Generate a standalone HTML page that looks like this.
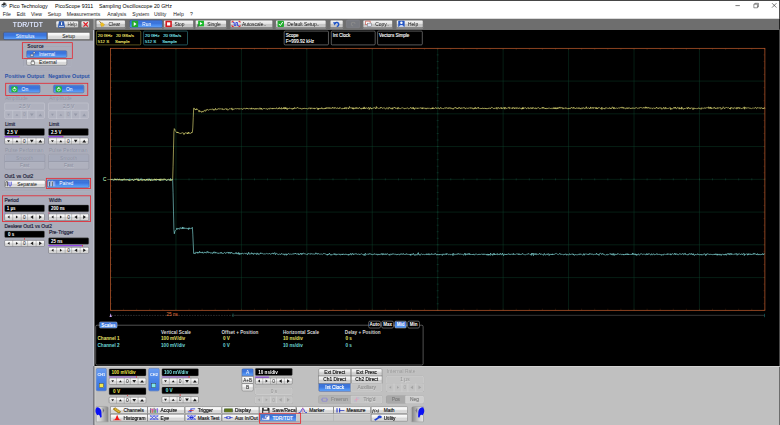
<!DOCTYPE html>
<html><head><meta charset="utf-8"><title>PicoScope 9311</title>
<style>
html,body{margin:0;padding:0;background:#c0c0c0;overflow:hidden;width:780px;height:425px}
#root{position:absolute;left:0;top:0;width:1920px;height:1047px;transform:scale(0.406250);transform-origin:0 0;font-family:"Liberation Sans",sans-serif;overflow:hidden}
#root div{position:absolute;box-sizing:border-box;white-space:nowrap}
#root svg{position:absolute;overflow:visible}
.t{font-size:11px}

.btn{background:linear-gradient(#ffffff,#efefef 45%,#d6d6d6 55%,#dedede);border:1.6px solid #6a6a6a;border-radius:4px;color:#111;font-size:12px;text-align:center}
.blue{background:linear-gradient(#4078dc,#3a72da 40%,#4585ea 60%,#62a4fa);border:1.6px solid #24489a;border-radius:4px;color:#fff;font-size:12px;text-align:center}
.dis{background:#afb1be;border:1px solid #d4d6de;border-radius:4px;color:#898e9f;font-size:12px;text-align:center;text-shadow:1px 1px 0 rgba(255,255,255,0.28)}
.disg{background:#c3c3c3;border:1.3px solid #e0e0e0;box-shadow:0 0 0 0.8px #a8a8a8;border-radius:4px;color:#939393;font-size:12px;text-align:center;text-shadow:1px 1px 0 rgba(255,255,255,0.3)}
.blk{background:#000;border-radius:3px;color:#fff;font-weight:bold;font-size:11px;border:1px solid #666}
.sp{background:linear-gradient(#fafafa,#d2d2d2);border:1px solid #808080;border-radius:2px;color:#222;font-size:9px;text-align:center}
.spd{background:#b8bcc9;border:1px solid #c9ccd6;border-radius:2px;color:#9a9eac;font-size:9px;text-align:center}
.spdg{background:#c6c6c6;border:1px solid #d4d4d4;border-radius:2px;color:#a5a5a5;font-size:9px;text-align:center}
.red{border:2.6px solid #e6242e}
.tb.btn{background:linear-gradient(#f6f6f6,#e2e2e2 45%,#c6c6c6 55%,#c9c9c9)}
.lbl{font-weight:bold}

</style></head><body><div id="root">
<div style="left:0.00px;top:0.00px;width:1920.00px;height:45.78px;background:#fff"></div>
<div style="left:0.00px;top:0.00px;width:1920.00px;height:1.85px;background:#1c1c1c"></div>
<div style="left:1918.28px;top:0.00px;width:1.72px;height:45.05px;background:#2a2a2a"></div>
<div class="t" style="left:22.89px;top:6.97px;height:15.60px;line-height:15.60px;font-size:13px;color:#000;">Pico Technology</div>
<div class="t" style="left:135.38px;top:6.97px;height:15.60px;line-height:15.60px;font-size:13px;color:#000;">PicoScope 9311</div>
<div class="t" style="left:243.69px;top:6.97px;height:15.60px;line-height:15.60px;font-size:13px;color:#000;">Sampling Oscilloscope 20 GHz</div>
<svg style="left:1.97px;top:6.15px;width:15.75px;height:14.28px" viewBox="0 0 16 14"><path d="M1 5 L9 1 L15 3.500 L7 8 Z" fill="#2a2a2a"/><path d="M1 6.500 L7 9.500 L15 5 L15 8 L7 13 L1 9.500 Z" fill="#5a7a9a"/><path d="M3 9.200 L7 11.300 L13 7.800" stroke="#dfe8f0" stroke-width="1" fill="none"/><rect x="6" y="0" width="5" height="3" fill="#3a3a3a"/></svg>
<svg style="left:1798.89px;top:-0.49px;width:123.08px;height:29.54px" viewBox="0 0 50 12"><path d="M4.6 5.6h4.4" stroke="#222" stroke-width="0.6" fill="none"/><path d="M23 4.2h3.6v3.6h-3.6z M24 4.2v-0.9h3.6v3.6h-1" stroke="#222" stroke-width="0.5" fill="none"/><path d="M41.2 3.2l4.4 4.4M45.6 3.2l-4.4 4.4" stroke="#222" stroke-width="0.6" fill="none"/></svg>
<div class="t" style="left:6.65px;top:27.58px;height:15.00px;line-height:15.00px;font-size:12.5px;color:#1a1a1a;">File</div>
<div class="t" style="left:41.11px;top:27.58px;height:15.00px;line-height:15.00px;font-size:12.5px;color:#1a1a1a;">Edit</div>
<div class="t" style="left:76.31px;top:27.58px;height:15.00px;line-height:15.00px;font-size:12.5px;color:#1a1a1a;">View</div>
<div class="t" style="left:117.42px;top:27.58px;height:15.00px;line-height:15.00px;font-size:12.5px;color:#1a1a1a;">Setup</div>
<div class="t" style="left:164.18px;top:27.58px;height:15.00px;line-height:15.00px;font-size:12.5px;color:#1a1a1a;">Measurements</div>
<div class="t" style="left:264.12px;top:27.58px;height:15.00px;line-height:15.00px;font-size:12.5px;color:#1a1a1a;">Analysis</div>
<div class="t" style="left:325.66px;top:27.58px;height:15.00px;line-height:15.00px;font-size:12.5px;color:#1a1a1a;">System</div>
<div class="t" style="left:379.08px;top:27.58px;height:15.00px;line-height:15.00px;font-size:12.5px;color:#1a1a1a;">Utility</div>
<div class="t" style="left:426.58px;top:27.58px;height:15.00px;line-height:15.00px;font-size:12.5px;color:#1a1a1a;">Help</div>
<div class="t" style="left:467.69px;top:27.58px;height:15.00px;line-height:15.00px;font-size:12.5px;color:#1a1a1a;">?</div>
<div style="left:0.00px;top:45.54px;width:1920.00px;height:28.31px;background:linear-gradient(#b0b0b0,#6e6e6e 1.2px,#6e6e6e)"></div>
<div class="btn tb" style="left:236.31px;top:49.48px;width:72.62px;height:19.20px;box-shadow:0 2.5px 1.5px rgba(255,255,255,0.22);line-height:19.40px;font-size:12px;text-align:left;padding-left:30.03px">Clear</div>
<svg style="left:241.72px;top:51.45px;width:16.25px;height:15.75px" viewBox="0 0 16 16"><path d="M2.500 1l5.500 6.500" stroke="#8a5a10" stroke-width="2"/><path d="M6.500 5.500l3.500-0.500 5.500 5-2 1.500-1 2.500-2.500-0.500-1.500 2-3.500-6z" fill="#f0c020" stroke="#b88a00" stroke-width="0.800"/></svg>
<div class="blue tb" style="left:318.77px;top:49.48px;width:80.74px;height:19.20px;box-shadow:0 2.5px 1.5px rgba(255,255,255,0.22);line-height:19.40px;font-size:12px;text-align:left;padding-left:30.28px">Run</div>
<svg style="left:324.18px;top:51.45px;width:16.25px;height:15.75px" viewBox="0 0 16 16"><rect x="0" y="0" width="16" height="16" fill="#1faa2c"/><path d="M5 3l7 5-7 5z" fill="#fff"/></svg>
<div class="btn tb" style="left:401.97px;top:49.48px;width:75.08px;height:19.20px;box-shadow:0 2.5px 1.5px rgba(255,255,255,0.22);line-height:19.40px;font-size:12px;text-align:left;padding-left:26.58px">Stop</div>
<svg style="left:407.38px;top:51.45px;width:16.25px;height:15.75px" viewBox="0 0 16 16"><rect x="0" y="0" width="16" height="16" fill="#d4181f"/><rect x="4" y="4" width="8" height="8" fill="#fff"/></svg>
<div class="btn tb" style="left:480.49px;top:49.48px;width:77.78px;height:19.20px;box-shadow:0 2.5px 1.5px rgba(255,255,255,0.22);line-height:19.40px;font-size:12px;text-align:left;padding-left:28.55px">Single</div>
<svg style="left:485.91px;top:51.45px;width:16.25px;height:15.75px" viewBox="0 0 16 16"><rect x="1.500" y="0" width="14.500" height="14" fill="#18b828"/><path d="M6 3l6.500 4-6.500 4z" fill="#fff"/><rect x="0" y="9" width="2" height="7" fill="#222"/></svg>
<div class="btn tb" style="left:566.15px;top:49.48px;width:105.85px;height:19.20px;box-shadow:0 2.5px 1.5px rgba(255,255,255,0.22);line-height:19.40px;font-size:12px;text-align:left;padding-left:28.55px">Autoscale..</div>
<svg style="left:569.60px;top:51.45px;width:22.15px;height:15.75px" viewBox="0 0 22 16"><path d="M1 5V1.500h4M17 1.500h4V5M21 11v3.500h-4M5 14.500H1V11" stroke="#e01820" stroke-width="2.200" fill="none"/><path d="M3 4.500h3.500v7.500h4V4.500h4v7.500h3.500" stroke="#2030e0" stroke-width="2" fill="none"/></svg>
<div class="btn tb" style="left:677.91px;top:49.48px;width:125.54px;height:19.20px;box-shadow:0 2.5px 1.5px rgba(255,255,255,0.22);line-height:19.40px;font-size:12px;text-align:left;padding-left:28.06px">Default Setup..</div>
<svg style="left:683.32px;top:51.45px;width:16.25px;height:15.75px" viewBox="0 0 16 16"><rect x="0" y="0" width="16" height="16" rx="2" fill="#1faa2c"/><path d="M3 8l4 4 6-9" stroke="#fff" stroke-width="2.5" fill="none"/></svg>
<div class="btn tb" style="left:812.31px;top:49.48px;width:32.74px;height:19.20px;box-shadow:0 2.5px 1.5px rgba(255,255,255,0.22);line-height:19.40px;font-size:12px;text-align:left;padding-left:28.06px"></div>
<svg style="left:820.18px;top:51.20px;width:16.74px;height:16.25px" viewBox="0 0 16 16"><path d="M4 7.500a4.800 4.800 0 1 1 4.500 6.500" stroke="#1f55c8" stroke-width="3.800" fill="none"/><path d="M-0.500 3.500l8.500 0.500-4.500 7.500z" fill="#1f55c8"/></svg>
<div style="left:852.43px;top:49.48px;width:33.72px;height:19.20px;background:#787a80;border:1px solid #8c8e94;border-radius:4px"></div>
<svg style="left:861.54px;top:51.69px;width:14.77px;height:14.77px" viewBox="0 0 16 16"><path d="M13 8a5 5 0 1 0-5 5" stroke="#8a8a8a" stroke-width="3" fill="none"/></svg>
<div class="btn tb" style="left:893.29px;top:49.48px;width:74.09px;height:19.20px;box-shadow:0 2.5px 1.5px rgba(255,255,255,0.22);line-height:19.40px;font-size:12px;text-align:left;padding-left:29.29px">Copy..</div>
<svg style="left:898.71px;top:51.45px;width:16.25px;height:15.75px" viewBox="0 0 16 16"><rect x="1" y="1" width="11" height="9" fill="#fff" stroke="#c0392b" stroke-width="1.5"/><rect x="5" y="6" width="10" height="9" fill="#dfe6f5" stroke="#555" stroke-width="1"/></svg>
<div class="btn tb" style="left:975.02px;top:49.48px;width:66.95px;height:19.20px;box-shadow:0 2.5px 1.5px rgba(255,255,255,0.22);line-height:19.40px;font-size:12px;text-align:left;padding-left:28.55px">Help</div>
<svg style="left:980.43px;top:51.45px;width:16.25px;height:15.75px" viewBox="0 0 16 16"><rect x="0" y="0" width="16" height="16" rx="2" fill="#2456c4"/><circle cx="8" cy="5" r="3" fill="#fff"/><path d="M2 15c0-5 12-5 12 0z" fill="#fff"/></svg>
<div style="left:0.00px;top:73.85px;width:231.38px;height:972.31px;background:#abadba"></div>
<div style="left:0.00px;top:73.60px;width:230.15px;height:26.58px;background:#6e6e6e"></div>
<div style="left:230.15px;top:901.42px;width:2.46px;height:144.74px;background:#55565c"></div>
<div style="left:230.89px;top:46.03px;width:2.95px;height:26.83px;background:linear-gradient(90deg,#d0d0d0,#a8a8a8)"></div>
<div style="left:232.62px;top:901.42px;width:1.97px;height:144.74px;background:#d4d4d4"></div>
<div class="t" style="left:1.23px;top:50.84px;height:19.92px;line-height:19.92px;font-size:16.6px;color:#dfe6fa;width:135.38px;text-align:center;letter-spacing:0.5px;text-shadow:0 0 1.5px #c8d4f8">TDR/TDT</div>
<div class="btn tb" style="left:137.35px;top:51.20px;width:56.86px;height:17.72px;line-height:17.92px;font-size:11.2px;text-align:left;padding-left:27.57px;color:#333">Help</div>
<svg style="left:142.77px;top:51.94px;width:16.74px;height:16.25px" viewBox="0 0 16 16"><path d="M2 0h12l2 11v5H0v-5z" fill="#2a58b0"/><path d="M7 2.500h2.500v7H7z" fill="#fff"/><path d="M2 11.500h12v2H2z" fill="#fff"/></svg>
<div class="btn tb" style="left:199.14px;top:51.20px;width:21.91px;height:17.72px;"></div>
<svg style="left:202.58px;top:52.68px;width:15.75px;height:14.28px" viewBox="0 0 16 16"><path d="M2 2l12 12M14 2L2 14" stroke="#e01b24" stroke-width="3.2"/></svg>
<div class="blue" style="left:7.88px;top:78.77px;width:107.82px;height:19.45px;line-height:19.65px;border-radius:4px 0 0 4px">Stimulus</div>
<div class="btn" style="left:115.69px;top:78.77px;width:106.58px;height:19.45px;line-height:19.65px;border-radius:0 4px 4px 0">Setup</div>
<div class="red" style="left:53.66px;top:104.12px;width:125.78px;height:40.86px;"></div>
<div style="left:57.11px;top:114.46px;width:118.89px;height:49.97px;border:1px solid #b9bdca;border-radius:4px;border-top-color:#9a9eac;border-left-color:#9a9eac"></div>
<div class="t" style="left:65.23px;top:106.52px;height:14.40px;line-height:14.40px;font-size:12px;color:#1c2038;font-weight:bold;background:#abadba;padding:0 2px">Source</div>
<div class="blue" style="left:64.74px;top:123.82px;width:99.94px;height:18.46px;line-height:18.66px;text-align:left;padding-left:30.0px">Internal</div>
<div class="btn" style="left:64.74px;top:144.74px;width:99.94px;height:16.49px;line-height:16.69px;text-align:left;padding-left:30.0px">External</div>
<svg style="left:72.62px;top:126.03px;width:14.77px;height:14.77px" viewBox="0 0 16 16"><path d="M2 8h8v6H2z" fill="#cfd6e6" stroke="#223" stroke-width="1"/><circle cx="12" cy="4" r="2.5" fill="#fff" stroke="#223"/></svg>
<svg style="left:73.85px;top:145.72px;width:13.54px;height:13.54px" viewBox="0 0 16 16"><path d="M3 7h10v8H3z M5 7V3h6v4" fill="#fff" stroke="#333" stroke-width="1.5"/></svg>
<div class="t" style="left:11.82px;top:181.13px;height:15.84px;line-height:15.84px;font-size:13.2px;color:#2a52a8;font-weight:bold">Positive Output</div>
<div class="t" style="left:118.65px;top:181.13px;height:15.84px;line-height:15.84px;font-size:13.2px;color:#2a52a8;font-weight:bold">Negative Output</div>
<div class="red" style="left:13.29px;top:204.06px;width:203.82px;height:32.00px;"></div>
<div class="blue" style="left:22.15px;top:209.23px;width:76.80px;height:20.18px;line-height:20.38px;text-align:left;padding-left:30.0px">On</div>
<svg style="left:27.57px;top:211.69px;width:15.26px;height:15.26px" viewBox="0 0 16 16"><rect width="16" height="16" rx="3" fill="#1fb53a"/><circle cx="8" cy="8.5" r="4" fill="none" stroke="#fff" stroke-width="1.8"/><path d="M8 2.5v5" stroke="#fff" stroke-width="2"/></svg>
<div class="blue" style="left:131.20px;top:209.23px;width:76.31px;height:20.18px;line-height:20.38px;text-align:left;padding-left:30.0px">On</div>
<svg style="left:136.62px;top:211.69px;width:15.26px;height:15.26px" viewBox="0 0 16 16"><rect width="16" height="16" rx="3" fill="#1fb53a"/><circle cx="8" cy="8.5" r="4" fill="none" stroke="#fff" stroke-width="1.8"/><path d="M8 2.5v5" stroke="#fff" stroke-width="2"/></svg>
<div class="t" style="left:12.80px;top:235.45px;height:15.00px;line-height:15.00px;font-size:12.5px;color:#898e9f;text-shadow:1px 1px 0 rgba(255,255,255,0.28)">Amplitude</div>
<div class="dis" style="left:11.08px;top:253.05px;width:98.95px;height:19.20px;line-height:19.40px;border-radius:3px 3px 0 0">2.5 V</div>
<div style="left:11.08px;top:271.51px;width:98.95px;height:20.92px;background:#b1b3c0;border:1px solid #d4d6de;border-radius:3px"></div>
<svg style="left:11.08px;top:271.51px;width:98.95px;height:20.92px" viewBox="0 0 98.95 20.92"><line x1="20.3" y1="0" x2="20.3" y2="20.9" stroke="#d3d6df" stroke-width="1"/><line x1="41.1" y1="0" x2="41.1" y2="20.9" stroke="#d3d6df" stroke-width="1"/><line x1="56.9" y1="0" x2="56.9" y2="20.9" stroke="#d3d6df" stroke-width="1"/><line x1="77.7" y1="0" x2="77.7" y2="20.9" stroke="#d3d6df" stroke-width="1"/><path d="M6.6 8.2h7.0l-3.5 5.1z" fill="#9599a8"/><path d="M27.2 13.1h7.0l-3.5 -5.1z" fill="#9599a8"/><path d="M62.7 7.5h9.2l-4.6 6.7z" fill="#9599a8"/><path d="M83.7 13.9h9.2l-4.6 -6.7z" fill="#9599a8"/></svg>
<div class="t" style="left:52.14px;top:275.02px;height:14.40px;line-height:14.40px;font-size:12px;color:#9599a8;width:15.83px;text-align:center;">0</div>
<div class="t" style="left:12.06px;top:298.28px;height:14.40px;line-height:14.40px;font-size:12px;color:#1c2038;-webkit-text-stroke:0.4px #1c2038">Limit</div>
<div class="blk" style="left:11.08px;top:315.82px;width:98.95px;height:18.46px;line-height:18.66px;padding-left:5px">2.5 V</div>
<div style="left:11.08px;top:335.02px;width:35.69px;height:2.95px;background:#8f45e4"></div>
<div style="left:46.03px;top:334.77px;width:1.97px;height:3.45px;background:#e03030"></div>
<div style="left:11.08px;top:338.95px;width:98.95px;height:16.49px;background:linear-gradient(#ffffff,#efefef 45%,#d4d4d4 55%,#dedede);border:1.6px solid #626262;border-radius:3px"></div>
<svg style="left:11.08px;top:338.95px;width:98.95px;height:16.49px" viewBox="0 0 98.95 16.49"><line x1="20.3" y1="0" x2="20.3" y2="16.5" stroke="#7a7a7a" stroke-width="1"/><line x1="41.1" y1="0" x2="41.1" y2="16.5" stroke="#7a7a7a" stroke-width="1"/><line x1="56.9" y1="0" x2="56.9" y2="16.5" stroke="#7a7a7a" stroke-width="1"/><line x1="77.7" y1="0" x2="77.7" y2="16.5" stroke="#7a7a7a" stroke-width="1"/><path d="M6.6 6.0h7.0l-3.5 5.1z" fill="#1a1a1a"/><path d="M27.2 10.9h7.0l-3.5 -5.1z" fill="#1a1a1a"/><path d="M62.7 5.3h9.2l-4.6 6.7z" fill="#1a1a1a"/><path d="M83.7 11.7h9.2l-4.6 -6.7z" fill="#1a1a1a"/></svg>
<div class="t" style="left:52.14px;top:340.25px;height:14.40px;line-height:14.40px;font-size:12px;color:#1a1a1a;width:15.83px;text-align:center;">0</div>
<div class="t" style="left:12.06px;top:361.55px;height:15.36px;line-height:15.36px;font-size:12.8px;color:#898e9f;text-shadow:1px 1px 0 rgba(255,255,255,0.28)">Pulse Performan</div>
<div class="dis" style="left:11.08px;top:378.58px;width:99.45px;height:19.69px;line-height:19.89px;border-radius:4px 4px 0 0;background:#a6aaba;border-color:#8f93a2;box-shadow:inset 1px 1px 0 #c0c3ce">Smooth</div>
<div class="dis" style="left:11.08px;top:397.54px;width:99.45px;height:19.20px;line-height:19.40px;border-radius:0 0 4px 4px;border-color:#8f93a2;box-shadow:inset 1px 1px 0 #c0c3ce">Fast</div>
<div class="t" style="left:121.11px;top:235.45px;height:15.00px;line-height:15.00px;font-size:12.5px;color:#898e9f;text-shadow:1px 1px 0 rgba(255,255,255,0.28)">Amplitude</div>
<div class="dis" style="left:119.38px;top:253.05px;width:98.95px;height:19.20px;line-height:19.40px;border-radius:3px 3px 0 0">2.5 V</div>
<div style="left:119.38px;top:271.51px;width:98.95px;height:20.92px;background:#b1b3c0;border:1px solid #d4d6de;border-radius:3px"></div>
<svg style="left:119.38px;top:271.51px;width:98.95px;height:20.92px" viewBox="0 0 98.95 20.92"><line x1="20.3" y1="0" x2="20.3" y2="20.9" stroke="#d3d6df" stroke-width="1"/><line x1="41.1" y1="0" x2="41.1" y2="20.9" stroke="#d3d6df" stroke-width="1"/><line x1="56.9" y1="0" x2="56.9" y2="20.9" stroke="#d3d6df" stroke-width="1"/><line x1="77.7" y1="0" x2="77.7" y2="20.9" stroke="#d3d6df" stroke-width="1"/><path d="M6.6 8.2h7.0l-3.5 5.1z" fill="#9599a8"/><path d="M27.2 13.1h7.0l-3.5 -5.1z" fill="#9599a8"/><path d="M62.7 7.5h9.2l-4.6 6.7z" fill="#9599a8"/><path d="M83.7 13.9h9.2l-4.6 -6.7z" fill="#9599a8"/></svg>
<div class="t" style="left:160.45px;top:275.02px;height:14.40px;line-height:14.40px;font-size:12px;color:#9599a8;width:15.83px;text-align:center;">0</div>
<div class="t" style="left:120.37px;top:298.28px;height:14.40px;line-height:14.40px;font-size:12px;color:#1c2038;-webkit-text-stroke:0.4px #1c2038">Limit</div>
<div class="blk" style="left:119.38px;top:315.82px;width:98.95px;height:18.46px;line-height:18.66px;padding-left:5px">2.5 V</div>
<div style="left:119.38px;top:335.02px;width:35.69px;height:2.95px;background:#8f45e4"></div>
<div style="left:154.34px;top:334.77px;width:1.97px;height:3.45px;background:#e03030"></div>
<div style="left:119.38px;top:338.95px;width:98.95px;height:16.49px;background:linear-gradient(#ffffff,#efefef 45%,#d4d4d4 55%,#dedede);border:1.6px solid #626262;border-radius:3px"></div>
<svg style="left:119.38px;top:338.95px;width:98.95px;height:16.49px" viewBox="0 0 98.95 16.49"><line x1="20.3" y1="0" x2="20.3" y2="16.5" stroke="#7a7a7a" stroke-width="1"/><line x1="41.1" y1="0" x2="41.1" y2="16.5" stroke="#7a7a7a" stroke-width="1"/><line x1="56.9" y1="0" x2="56.9" y2="16.5" stroke="#7a7a7a" stroke-width="1"/><line x1="77.7" y1="0" x2="77.7" y2="16.5" stroke="#7a7a7a" stroke-width="1"/><path d="M6.6 6.0h7.0l-3.5 5.1z" fill="#1a1a1a"/><path d="M27.2 10.9h7.0l-3.5 -5.1z" fill="#1a1a1a"/><path d="M62.7 5.3h9.2l-4.6 6.7z" fill="#1a1a1a"/><path d="M83.7 11.7h9.2l-4.6 -6.7z" fill="#1a1a1a"/></svg>
<div class="t" style="left:160.45px;top:340.25px;height:14.40px;line-height:14.40px;font-size:12px;color:#1a1a1a;width:15.83px;text-align:center;">0</div>
<div class="t" style="left:120.37px;top:361.55px;height:15.36px;line-height:15.36px;font-size:12.8px;color:#898e9f;text-shadow:1px 1px 0 rgba(255,255,255,0.28)">Pulse Performan</div>
<div class="dis" style="left:119.38px;top:378.58px;width:99.45px;height:19.69px;line-height:19.89px;border-radius:4px 4px 0 0;background:#a6aaba;border-color:#8f93a2;box-shadow:inset 1px 1px 0 #c0c3ce">Smooth</div>
<div class="dis" style="left:119.38px;top:397.54px;width:99.45px;height:19.20px;line-height:19.40px;border-radius:0 0 4px 4px;border-color:#8f93a2;box-shadow:inset 1px 1px 0 #c0c3ce">Fast</div>
<div class="t" style="left:11.08px;top:426.03px;height:14.40px;line-height:14.40px;font-size:12px;color:#1c2038;-webkit-text-stroke:0.4px #1c2038">Out1 vs Out2</div>
<div class="btn" style="left:11.08px;top:443.08px;width:100.43px;height:18.71px;line-height:18.91px;text-align:left;padding-left:30.3px">Separate</div>
<div class="red" style="left:112.74px;top:438.15px;width:111.51px;height:27.32px;"></div>
<div class="blue" style="left:116.18px;top:442.34px;width:103.63px;height:19.69px;line-height:19.89px;text-align:left;padding-left:28.6px">Paired</div>
<svg style="left:13.78px;top:445.54px;width:24.62px;height:13.78px" viewBox="0 0 20 11"><path d="M0.5 10V1h3.2v9" stroke="#111" stroke-width="1.3" fill="#fff"/><path d="M6.5 1v6.5c0 3 4.5 3 4.5 0V1" stroke="#2020d8" stroke-width="1.5" fill="none"/></svg>
<svg style="left:119.14px;top:445.05px;width:24.62px;height:14.77px" viewBox="0 0 20 12"><path d="M0.5 11V1h3.2v10" stroke="#fff" stroke-width="1.3" fill="#234"/><path d="M6.3 11V1h3v10" stroke="#fff" stroke-width="1.3" fill="#234"/><path d="M11.2 1v10M13 1v10" stroke="#c8d0ff" stroke-width="1.1"/></svg>
<div style="left:4.92px;top:469.66px;width:218.09px;height:1.23px;background:#858997"></div>
<div style="left:4.92px;top:470.89px;width:218.09px;height:1.23px;background:#c4c7d2"></div>
<div style="left:7.14px;top:172.80px;width:216.37px;height:1.23px;background:#8f93a1"></div>
<div style="left:7.14px;top:174.03px;width:216.37px;height:1.23px;background:#c0c3ce"></div>
<div class="red" style="left:5.42px;top:481.23px;width:219.08px;height:64.74px;"></div>
<div class="t" style="left:11.08px;top:485.60px;height:14.40px;line-height:14.40px;font-size:12px;color:#1c2038;-webkit-text-stroke:0.4px #1c2038">Period</div>
<div class="t" style="left:120.62px;top:485.60px;height:14.40px;line-height:14.40px;font-size:12px;color:#1c2038;-webkit-text-stroke:0.4px #1c2038">Width</div>
<div class="blk" style="left:10.58px;top:503.88px;width:99.20px;height:18.46px;line-height:18.66px;padding-left:5px">1 µs</div>
<div style="left:10.58px;top:523.32px;width:2.22px;height:2.22px;background:#9050e0"></div>
<div class="blk" style="left:119.38px;top:503.88px;width:99.69px;height:18.46px;line-height:18.66px;padding-left:5px">200 ns</div>
<div style="left:119.38px;top:523.32px;width:2.22px;height:2.22px;background:#c04060"></div>
<div style="left:10.58px;top:526.28px;width:99.20px;height:16.49px;background:linear-gradient(#ffffff,#efefef 45%,#d4d4d4 55%,#dedede);border:1.6px solid #626262;border-radius:3px"></div>
<svg style="left:10.58px;top:526.28px;width:99.20px;height:16.49px" viewBox="0 0 99.20 16.49"><line x1="20.3" y1="0" x2="20.3" y2="16.5" stroke="#7a7a7a" stroke-width="1"/><line x1="41.2" y1="0" x2="41.2" y2="16.5" stroke="#7a7a7a" stroke-width="1"/><line x1="57.0" y1="0" x2="57.0" y2="16.5" stroke="#7a7a7a" stroke-width="1"/><line x1="77.9" y1="0" x2="77.9" y2="16.5" stroke="#7a7a7a" stroke-width="1"/><path d="M12.6 4.7v7.0l-5.1 -3.5z" fill="#1a1a1a"/><path d="M28.3 4.7v7.0l5.1 -3.5z" fill="#1a1a1a"/><path d="M70.7 3.6v9.2l-6.7 -4.6z" fill="#1a1a1a"/><path d="M85.3 3.6v9.2l6.7 -4.6z" fill="#1a1a1a"/></svg>
<div class="t" style="left:51.75px;top:527.57px;height:14.40px;line-height:14.40px;font-size:12px;color:#1a1a1a;width:15.87px;text-align:center;">0</div>
<div style="left:119.38px;top:526.28px;width:99.69px;height:16.49px;background:linear-gradient(#ffffff,#efefef 45%,#d4d4d4 55%,#dedede);border:1.6px solid #626262;border-radius:3px"></div>
<svg style="left:119.38px;top:526.28px;width:99.69px;height:16.49px" viewBox="0 0 99.69 16.49"><line x1="20.4" y1="0" x2="20.4" y2="16.5" stroke="#7a7a7a" stroke-width="1"/><line x1="41.4" y1="0" x2="41.4" y2="16.5" stroke="#7a7a7a" stroke-width="1"/><line x1="57.3" y1="0" x2="57.3" y2="16.5" stroke="#7a7a7a" stroke-width="1"/><line x1="78.3" y1="0" x2="78.3" y2="16.5" stroke="#7a7a7a" stroke-width="1"/><path d="M12.7 4.7v7.0l-5.1 -3.5z" fill="#1a1a1a"/><path d="M28.5 4.7v7.0l5.1 -3.5z" fill="#1a1a1a"/><path d="M71.0 3.6v9.2l-6.7 -4.6z" fill="#1a1a1a"/><path d="M85.8 3.6v9.2l6.7 -4.6z" fill="#1a1a1a"/></svg>
<div class="t" style="left:160.76px;top:527.57px;height:14.40px;line-height:14.40px;font-size:12px;color:#1a1a1a;width:15.95px;text-align:center;">0</div>
<div class="t" style="left:11.08px;top:548.62px;height:14.40px;line-height:14.40px;font-size:12px;color:#1c2038;-webkit-text-stroke:0.4px #1c2038">Deskew Out1 vs Out2</div>
<div class="blk" style="left:10.58px;top:568.12px;width:99.20px;height:17.23px;line-height:17.43px;padding-left:8px">0 s</div>
<div style="left:59.08px;top:586.34px;width:1.97px;height:3.45px;background:#e03030"></div>
<div style="left:10.58px;top:591.02px;width:99.20px;height:16.00px;background:linear-gradient(#ffffff,#efefef 45%,#d4d4d4 55%,#dedede);border:1.6px solid #626262;border-radius:3px"></div>
<svg style="left:10.58px;top:591.02px;width:99.20px;height:16.00px" viewBox="0 0 99.20 16.00"><line x1="20.3" y1="0" x2="20.3" y2="16.0" stroke="#7a7a7a" stroke-width="1"/><line x1="41.2" y1="0" x2="41.2" y2="16.0" stroke="#7a7a7a" stroke-width="1"/><line x1="57.0" y1="0" x2="57.0" y2="16.0" stroke="#7a7a7a" stroke-width="1"/><line x1="77.9" y1="0" x2="77.9" y2="16.0" stroke="#7a7a7a" stroke-width="1"/><path d="M12.6 4.5v7.0l-5.1 -3.5z" fill="#1a1a1a"/><path d="M28.3 4.5v7.0l5.1 -3.5z" fill="#1a1a1a"/><path d="M70.7 3.4v9.2l-6.7 -4.6z" fill="#1a1a1a"/><path d="M85.3 3.4v9.2l6.7 -4.6z" fill="#1a1a1a"/></svg>
<div class="t" style="left:51.75px;top:592.06px;height:14.40px;line-height:14.40px;font-size:12px;color:#1a1a1a;width:15.87px;text-align:center;">0</div>
<div class="t" style="left:120.62px;top:565.35px;height:14.40px;line-height:14.40px;font-size:12px;color:#1c2038;-webkit-text-stroke:0.4px #1c2038">Pre-Trigger</div>
<div class="blk" style="left:119.38px;top:584.86px;width:99.69px;height:17.48px;line-height:17.68px;padding-left:5px">25 ns</div>
<div style="left:119.38px;top:603.08px;width:83.69px;height:3.20px;background:#8f45e4"></div>
<div style="left:201.85px;top:602.83px;width:2.22px;height:3.69px;background:#e03030"></div>
<div style="left:119.38px;top:608.49px;width:99.69px;height:16.00px;background:linear-gradient(#ffffff,#efefef 45%,#d4d4d4 55%,#dedede);border:1.6px solid #626262;border-radius:3px"></div>
<svg style="left:119.38px;top:608.49px;width:99.69px;height:16.00px" viewBox="0 0 99.69 16.00"><line x1="20.4" y1="0" x2="20.4" y2="16.0" stroke="#7a7a7a" stroke-width="1"/><line x1="41.4" y1="0" x2="41.4" y2="16.0" stroke="#7a7a7a" stroke-width="1"/><line x1="57.3" y1="0" x2="57.3" y2="16.0" stroke="#7a7a7a" stroke-width="1"/><line x1="78.3" y1="0" x2="78.3" y2="16.0" stroke="#7a7a7a" stroke-width="1"/><path d="M12.7 4.5v7.0l-5.1 -3.5z" fill="#1a1a1a"/><path d="M28.5 4.5v7.0l5.1 -3.5z" fill="#1a1a1a"/><path d="M71.0 3.4v9.2l-6.7 -4.6z" fill="#1a1a1a"/><path d="M85.8 3.4v9.2l6.7 -4.6z" fill="#1a1a1a"/></svg>
<div class="t" style="left:160.76px;top:609.54px;height:14.40px;line-height:14.40px;font-size:12px;color:#1a1a1a;width:15.95px;text-align:center;">0</div>
<div style="left:231.63px;top:72.62px;width:1688.37px;height:828.80px;background:#000"></div>
<div style="left:228.68px;top:73.85px;width:2.95px;height:827.57px;background:linear-gradient(90deg,#b4b8c6,#cfd1da)"></div>
<div style="left:1918.03px;top:45.05px;width:1.97px;height:27.57px;background:#111"></div>
<div style="left:1918.03px;top:72.62px;width:1.97px;height:973.54px;background:#5a5a5a"></div>
<div style="left:236.55px;top:76.31px;width:110.52px;height:35.20px;border:1.5px solid #d8c84a;border-radius:3px"></div>
<div class="t" style="left:240.74px;top:80.04px;height:12.72px;line-height:12.72px;font-size:10.6px;color:#f0e468;-webkit-text-stroke:0.3px #f0e468">20 GHz &nbsp;&nbsp;20 GSa/s</div>
<div class="t" style="left:240.74px;top:95.79px;height:12.72px;line-height:12.72px;font-size:10.6px;color:#f0e468;-webkit-text-stroke:0.3px #f0e468">512 S &nbsp;&nbsp;&nbsp;&nbsp;Sample</div>
<div style="left:352.74px;top:76.31px;width:109.54px;height:35.20px;border:1.5px solid #4ec6cf;border-radius:3px"></div>
<div class="t" style="left:356.92px;top:80.04px;height:12.72px;line-height:12.72px;font-size:10.6px;color:#7ce4ee;-webkit-text-stroke:0.3px #7ce4ee">20 GHz &nbsp;&nbsp;20 GSa/s</div>
<div class="t" style="left:356.92px;top:95.79px;height:12.72px;line-height:12.72px;font-size:10.6px;color:#7ce4ee;-webkit-text-stroke:0.3px #7ce4ee">512 S &nbsp;&nbsp;&nbsp;&nbsp;Sample</div>
<div style="left:699.08px;top:76.31px;width:110.28px;height:35.20px;border:1.5px solid #d8d8d8;border-radius:3px"></div>
<div class="t" style="left:703.26px;top:79.68px;height:13.44px;line-height:13.44px;font-size:11.2px;color:#ffffff;-webkit-text-stroke:0.3px #ffffff">Scope</div>
<div class="t" style="left:703.26px;top:95.43px;height:13.44px;line-height:13.44px;font-size:11.2px;color:#ffffff;-webkit-text-stroke:0.3px #ffffff">F=999.92 kHz</div>
<div style="left:814.77px;top:76.31px;width:109.05px;height:35.20px;border:1.5px solid #d8d8d8;border-radius:3px"></div>
<div class="t" style="left:818.95px;top:79.68px;height:13.44px;line-height:13.44px;font-size:11.2px;color:#ffffff;-webkit-text-stroke:0.3px #ffffff">Int Clock</div>
<div class="t" style="left:818.95px;top:95.43px;height:13.44px;line-height:13.44px;font-size:11.2px;color:#ffffff;-webkit-text-stroke:0.3px #ffffff"></div>
<div style="left:928.74px;top:76.31px;width:111.02px;height:35.20px;border:1.5px solid #d8d8d8;border-radius:3px"></div>
<div class="t" style="left:932.92px;top:79.68px;height:13.44px;line-height:13.44px;font-size:11.2px;color:#ffffff;-webkit-text-stroke:0.3px #ffffff">Vectors Simple</div>
<div class="t" style="left:932.92px;top:95.43px;height:13.44px;line-height:13.44px;font-size:11.2px;color:#ffffff;-webkit-text-stroke:0.3px #ffffff"></div>
<svg style="left:271.51px;top:119.14px;width:1610.83px;height:644.92px" viewBox="0 0 1610.83 644.92"><line x1="161.1" y1="0" x2="161.1" y2="644.9" stroke="#0f4a32" stroke-width="1"/><line x1="322.2" y1="0" x2="322.2" y2="644.9" stroke="#0f4a32" stroke-width="1"/><line x1="483.2" y1="0" x2="483.2" y2="644.9" stroke="#0f4a32" stroke-width="1"/><line x1="644.3" y1="0" x2="644.3" y2="644.9" stroke="#0f4a32" stroke-width="1"/><line x1="805.4" y1="0" x2="805.4" y2="644.9" stroke="#0f4a32" stroke-width="1"/><line x1="966.5" y1="0" x2="966.5" y2="644.9" stroke="#0f4a32" stroke-width="1"/><line x1="1127.6" y1="0" x2="1127.6" y2="644.9" stroke="#0f4a32" stroke-width="1"/><line x1="1288.7" y1="0" x2="1288.7" y2="644.9" stroke="#0f4a32" stroke-width="1"/><line x1="1449.7" y1="0" x2="1449.7" y2="644.9" stroke="#0f4a32" stroke-width="1"/><line x1="0" y1="80.6" x2="1610.8" y2="80.6" stroke="#0f4a32" stroke-width="1"/><line x1="0" y1="161.2" x2="1610.8" y2="161.2" stroke="#0f4a32" stroke-width="1"/><line x1="0" y1="241.8" x2="1610.8" y2="241.8" stroke="#0f4a32" stroke-width="1"/><line x1="0" y1="322.5" x2="1610.8" y2="322.5" stroke="#0f4a32" stroke-width="1"/><line x1="0" y1="403.1" x2="1610.8" y2="403.1" stroke="#0f4a32" stroke-width="1"/><line x1="0" y1="483.7" x2="1610.8" y2="483.7" stroke="#0f4a32" stroke-width="1"/><line x1="0" y1="564.3" x2="1610.8" y2="564.3" stroke="#0f4a32" stroke-width="1"/><path d="M0.0 0v4M0.0 644.9v-4M32.2 0v4M32.2 644.9v-4M64.4 0v4M64.4 644.9v-4M96.6 0v4M96.6 644.9v-4M128.9 0v4M128.9 644.9v-4M161.1 0v4M161.1 644.9v-4M193.3 0v4M193.3 644.9v-4M225.5 0v4M225.5 644.9v-4M257.7 0v4M257.7 644.9v-4M289.9 0v4M289.9 644.9v-4M322.2 0v4M322.2 644.9v-4M354.4 0v4M354.4 644.9v-4M386.6 0v4M386.6 644.9v-4M418.8 0v4M418.8 644.9v-4M451.0 0v4M451.0 644.9v-4M483.2 0v4M483.2 644.9v-4M515.5 0v4M515.5 644.9v-4M547.7 0v4M547.7 644.9v-4M579.9 0v4M579.9 644.9v-4M612.1 0v4M612.1 644.9v-4M644.3 0v4M644.3 644.9v-4M676.5 0v4M676.5 644.9v-4M708.8 0v4M708.8 644.9v-4M741.0 0v4M741.0 644.9v-4M773.2 0v4M773.2 644.9v-4M805.4 0v4M805.4 644.9v-4M837.6 0v4M837.6 644.9v-4M869.8 0v4M869.8 644.9v-4M902.1 0v4M902.1 644.9v-4M934.3 0v4M934.3 644.9v-4M966.5 0v4M966.5 644.9v-4M998.7 0v4M998.7 644.9v-4M1030.9 0v4M1030.9 644.9v-4M1063.1 0v4M1063.1 644.9v-4M1095.4 0v4M1095.4 644.9v-4M1127.6 0v4M1127.6 644.9v-4M1159.8 0v4M1159.8 644.9v-4M1192.0 0v4M1192.0 644.9v-4M1224.2 0v4M1224.2 644.9v-4M1256.4 0v4M1256.4 644.9v-4M1288.7 0v4M1288.7 644.9v-4M1320.9 0v4M1320.9 644.9v-4M1353.1 0v4M1353.1 644.9v-4M1385.3 0v4M1385.3 644.9v-4M1417.5 0v4M1417.5 644.9v-4M1449.7 0v4M1449.7 644.9v-4M1482.0 0v4M1482.0 644.9v-4M1514.2 0v4M1514.2 644.9v-4M1546.4 0v4M1546.4 644.9v-4M1578.6 0v4M1578.6 644.9v-4M1610.8 0v4M1610.8 644.9v-4M0 0.0h4M1610.8 0.0h-4M0 16.1h4M1610.8 16.1h-4M0 32.2h4M1610.8 32.2h-4M0 48.4h4M1610.8 48.4h-4M0 64.5h4M1610.8 64.5h-4M0 80.6h4M1610.8 80.6h-4M0 96.7h4M1610.8 96.7h-4M0 112.9h4M1610.8 112.9h-4M0 129.0h4M1610.8 129.0h-4M0 145.1h4M1610.8 145.1h-4M0 161.2h4M1610.8 161.2h-4M0 177.4h4M1610.8 177.4h-4M0 193.5h4M1610.8 193.5h-4M0 209.6h4M1610.8 209.6h-4M0 225.7h4M1610.8 225.7h-4M0 241.8h4M1610.8 241.8h-4M0 258.0h4M1610.8 258.0h-4M0 274.1h4M1610.8 274.1h-4M0 290.2h4M1610.8 290.2h-4M0 306.3h4M1610.8 306.3h-4M0 322.5h4M1610.8 322.5h-4M0 338.6h4M1610.8 338.6h-4M0 354.7h4M1610.8 354.7h-4M0 370.8h4M1610.8 370.8h-4M0 387.0h4M1610.8 387.0h-4M0 403.1h4M1610.8 403.1h-4M0 419.2h4M1610.8 419.2h-4M0 435.3h4M1610.8 435.3h-4M0 451.4h4M1610.8 451.4h-4M0 467.6h4M1610.8 467.6h-4M0 483.7h4M1610.8 483.7h-4M0 499.8h4M1610.8 499.8h-4M0 515.9h4M1610.8 515.9h-4M0 532.1h4M1610.8 532.1h-4M0 548.2h4M1610.8 548.2h-4M0 564.3h4M1610.8 564.3h-4M0 580.4h4M1610.8 580.4h-4M0 596.6h4M1610.8 596.6h-4M0 612.7h4M1610.8 612.7h-4M0 628.8h4M1610.8 628.8h-4M0 644.9h4M1610.8 644.9h-4" stroke="#70381c" stroke-width="0.8"/><path d="M0.0 320.0v5M32.2 320.0v5M64.4 320.0v5M96.6 320.0v5M128.9 320.0v5M161.1 320.0v5M193.3 320.0v5M225.5 320.0v5M257.7 320.0v5M289.9 320.0v5M322.2 320.0v5M354.4 320.0v5M386.6 320.0v5M418.8 320.0v5M451.0 320.0v5M483.2 320.0v5M515.5 320.0v5M547.7 320.0v5M579.9 320.0v5M612.1 320.0v5M644.3 320.0v5M676.5 320.0v5M708.8 320.0v5M741.0 320.0v5M773.2 320.0v5M805.4 320.0v5M837.6 320.0v5M869.8 320.0v5M902.1 320.0v5M934.3 320.0v5M966.5 320.0v5M998.7 320.0v5M1030.9 320.0v5M1063.1 320.0v5M1095.4 320.0v5M1127.6 320.0v5M1159.8 320.0v5M1192.0 320.0v5M1224.2 320.0v5M1256.4 320.0v5M1288.7 320.0v5M1320.9 320.0v5M1353.1 320.0v5M1385.3 320.0v5M1417.5 320.0v5M1449.7 320.0v5M1482.0 320.0v5M1514.2 320.0v5M1546.4 320.0v5M1578.6 320.0v5M1610.8 320.0v5M802.9 0.0h5M802.9 16.1h5M802.9 32.2h5M802.9 48.4h5M802.9 64.5h5M802.9 80.6h5M802.9 96.7h5M802.9 112.9h5M802.9 129.0h5M802.9 145.1h5M802.9 161.2h5M802.9 177.4h5M802.9 193.5h5M802.9 209.6h5M802.9 225.7h5M802.9 241.8h5M802.9 258.0h5M802.9 274.1h5M802.9 290.2h5M802.9 306.3h5M802.9 322.5h5M802.9 338.6h5M802.9 354.7h5M802.9 370.8h5M802.9 387.0h5M802.9 403.1h5M802.9 419.2h5M802.9 435.3h5M802.9 451.4h5M802.9 467.6h5M802.9 483.7h5M802.9 499.8h5M802.9 515.9h5M802.9 532.1h5M802.9 548.2h5M802.9 564.3h5M802.9 580.4h5M802.9 596.6h5M802.9 612.7h5M802.9 628.8h5M802.9 644.9h5" stroke="#1c5a4a" stroke-width="1"/><rect x="0" y="0" width="1610.8" height="644.9" fill="none" stroke="#b4562a" stroke-width="1.9"/><polyline points="0.0,323.1 1.0,324.1 2.1,323.2 3.1,323.1 4.1,322.3 5.2,323.2 6.2,324.8 7.2,324.0 8.3,324.7 9.3,323.8 10.3,323.9 11.4,323.7 12.4,321.4 13.4,324.5 14.5,324.1 15.5,324.1 16.5,321.4 17.6,321.3 18.6,322.4 19.6,322.9 20.7,323.8 21.7,323.4 22.7,324.1 23.8,322.7 24.8,323.8 25.8,323.9 26.9,322.6 27.9,325.6 28.9,324.1 30.0,324.9 31.0,322.7 32.0,322.5 33.1,323.0 34.1,323.3 35.2,324.2 36.2,323.8 37.2,322.9 38.3,322.3 39.3,322.8 40.3,324.9 41.4,322.5 42.4,323.7 43.4,324.0 44.5,321.6 45.5,323.5 46.5,325.1 47.6,321.0 48.6,323.1 49.6,323.3 50.7,322.4 51.7,324.1 52.7,323.4 53.8,321.6 54.8,324.5 55.8,324.3 56.9,324.6 57.9,325.2 58.9,323.9 60.0,323.6 61.0,321.8 62.0,324.2 63.1,322.7 64.1,322.9 65.1,321.9 66.2,322.3 67.2,322.8 68.2,325.0 69.3,320.9 70.3,321.7 71.3,323.7 72.4,325.2 73.4,324.2 74.4,321.1 75.5,320.3 76.5,323.9 77.5,322.5 78.6,322.1 79.6,324.6 80.6,324.8 81.7,323.6 82.7,323.7 83.7,324.0 84.8,325.4 85.8,324.2 86.8,324.1 87.9,324.1 88.9,321.5 89.9,325.0 91.0,324.6 92.0,324.1 93.0,321.0 94.1,322.7 95.1,324.5 96.1,321.2 97.2,323.2 98.2,324.7 99.2,321.8 100.3,325.4 101.3,324.1 102.4,323.3 103.4,323.8 104.4,324.2 105.5,323.6 106.5,324.9 107.5,322.6 108.6,322.9 109.6,324.7 110.6,323.5 111.7,322.4 112.7,324.6 113.7,325.2 114.8,322.9 115.8,321.7 116.8,323.3 117.9,323.3 118.9,323.1 119.9,325.2 121.0,322.2 122.0,325.0 123.0,321.9 124.1,322.5 125.1,324.2 126.1,324.8 127.2,324.5 128.2,323.9 129.2,323.6 130.3,323.6 131.3,324.2 132.3,323.2 133.4,323.8 134.4,324.2 135.4,323.4 136.5,324.4 137.5,324.1 138.5,325.9 139.6,323.8 140.6,322.9 141.6,323.0 142.7,323.4 143.7,324.6 144.7,323.0 145.8,323.9 146.8,325.7 147.8,320.3 148.9,322.1 149.9,323.7 150.9,323.9 152.0,323.7 153.0,322.9 154.0,355.1 155.1,400.9 156.1,446.2 157.1,456.4 158.2,451.7 159.2,448.8 160.2,448.0 161.3,446.7 162.3,446.1 163.3,442.1 164.4,444.3 165.4,445.7 166.4,442.7 167.5,443.8 168.5,444.8 169.6,444.5 170.6,445.2 171.6,441.1 172.7,442.7 173.7,442.7 174.7,443.8 175.8,444.3 176.8,439.7 177.8,444.3 178.9,441.1 179.9,443.7 180.9,441.0 182.0,443.1 183.0,444.3 184.0,442.7 185.1,443.1 186.1,443.8 187.1,443.0 188.2,442.7 189.2,444.7 190.2,444.1 191.3,442.5 192.3,446.2 193.3,441.4 194.4,444.0 195.4,442.5 196.4,443.0 197.5,443.7 198.5,443.1 199.5,443.6 200.6,441.0 201.6,441.0 202.6,457.5 203.7,482.1 204.7,504.7 205.7,503.3 206.8,506.0 207.8,504.8 208.8,505.2 209.9,501.9 210.9,502.8 211.9,501.2 213.0,503.4 214.0,504.3 215.0,501.2 216.1,504.1 217.1,503.4 218.1,501.9 219.2,499.7 220.2,503.9 221.2,502.0 222.3,501.4 223.3,502.7 224.3,502.7 225.4,504.1 226.4,501.0 227.4,503.7 228.5,504.1 229.5,504.1 230.5,502.1 231.6,501.5 232.6,503.7 233.6,502.6 234.7,502.7 235.7,504.3 236.8,502.3 237.8,499.8 238.8,502.2 239.9,500.4 240.9,503.7 241.9,503.2 243.0,502.0 244.0,502.8 245.0,503.9 246.1,503.0 247.1,504.6 248.1,502.9 249.2,504.3 250.2,504.9 251.2,505.1 252.3,502.3 253.3,504.2 254.3,500.9 255.4,501.9 256.4,500.8 257.4,504.6 258.5,501.8 259.5,503.3 260.5,503.1 261.6,503.4 262.6,502.7 263.6,503.7 264.7,505.7 265.7,503.6 266.7,504.2 267.8,504.8 268.8,503.4 269.8,502.1 270.9,503.0 271.9,505.0 272.9,501.7 274.0,503.0 275.0,505.0 276.0,504.8 277.1,503.8 278.1,504.9 279.1,504.1 280.2,502.5 281.2,502.0 282.2,503.2 283.3,505.1 284.3,503.3 285.3,502.9 286.4,503.1 287.4,502.2 288.4,504.0 289.5,502.7 290.5,504.6 291.5,501.3 292.6,504.6 293.6,503.5 294.6,501.9 295.7,505.2 296.7,504.0 297.7,501.6 298.8,503.3 299.8,504.7 300.8,503.8 301.9,505.4 302.9,505.4 304.0,505.3 305.0,504.9 306.0,506.2 307.1,505.3 308.1,505.1 309.1,502.0 310.2,505.7 311.2,506.2 312.2,504.3 313.3,504.1 314.3,507.1 315.3,502.5 316.4,505.3 317.4,507.7 318.4,503.6 319.5,505.6 320.5,507.1 321.5,504.7 322.6,505.5 323.6,506.0 324.6,503.8 325.7,504.8 326.7,505.3 327.7,505.9 328.8,504.9 329.8,504.7 330.8,503.7 331.9,504.6 332.9,506.1 333.9,505.2 335.0,504.0 336.0,504.0 337.0,508.4 338.1,506.5 339.1,505.9 340.1,501.9 341.2,505.9 342.2,505.8 343.2,507.3 344.3,505.7 345.3,505.1 346.3,505.9 347.4,502.9 348.4,506.5 349.4,505.7 350.5,504.4 351.5,506.9 352.5,507.5 353.6,503.6 354.6,504.5 355.6,505.7 356.7,505.6 357.7,504.9 358.7,504.2 359.8,508.0 360.8,506.7 361.8,504.0 362.9,503.8 363.9,507.6 364.9,506.7 366.0,507.7 367.0,506.5 368.0,504.5 369.1,505.9 370.1,502.9 371.2,504.6 372.2,505.5 373.2,506.2 374.3,504.7 375.3,505.5 376.3,506.2 377.4,506.1 378.4,506.4 379.4,505.9 380.5,505.3 381.5,506.7 382.5,505.8 383.6,504.7 384.6,505.0 385.6,505.7 386.7,505.6 387.7,506.0 388.7,505.8 389.8,506.0 390.8,505.6 391.8,504.3 392.9,506.3 393.9,507.1 394.9,506.4 396.0,505.6 397.0,506.4 398.0,504.7 399.1,503.5 400.1,506.0 401.1,504.7 402.2,506.8 403.2,504.6 404.2,502.7 405.3,504.7 406.3,507.9 407.3,505.5 408.4,504.3 409.4,505.0 410.4,506.6 411.5,506.6 412.5,506.2 413.5,507.8 414.6,506.9 415.6,506.0 416.6,506.8 417.7,508.1 418.7,507.2 419.7,507.3 420.8,504.7 421.8,505.9 422.8,507.0 423.9,505.7 424.9,507.4 425.9,506.8 427.0,507.2 428.0,505.9 429.0,509.3 430.1,507.7 431.1,505.9 432.1,506.3 433.2,509.4 434.2,505.7 435.2,507.3 436.3,507.4 437.3,506.2 438.4,504.8 439.4,506.4 440.4,506.7 441.5,507.6 442.5,507.2 443.5,506.3 444.6,507.3 445.6,506.9 446.6,506.5 447.7,506.3 448.7,506.0 449.7,507.1 450.8,505.0 451.8,505.5 452.8,506.3 453.9,504.5 454.9,505.8 455.9,503.8 457.0,505.5 458.0,507.0 459.0,507.0 460.1,506.3 461.1,506.1 462.1,504.6 463.2,508.6 464.2,507.0 465.2,507.7 466.3,505.3 467.3,506.2 468.3,504.2 469.4,507.4 470.4,507.6 471.4,504.1 472.5,506.3 473.5,507.2 474.5,504.3 475.6,504.2 476.6,505.1 477.6,505.7 478.7,504.7 479.7,506.5 480.7,506.8 481.8,507.2 482.8,507.3 483.8,508.3 484.9,507.9 485.9,504.9 486.9,505.9 488.0,505.2 489.0,505.2 490.0,506.4 491.1,506.5 492.1,507.1 493.1,504.6 494.2,505.0 495.2,506.5 496.2,506.3 497.3,506.2 498.3,506.5 499.3,505.6 500.4,507.4 501.4,507.0 502.4,506.4 503.5,505.7 504.5,506.4 505.6,503.2 506.6,505.4 507.6,506.6 508.7,504.7 509.7,506.8 510.7,506.8 511.8,504.9 512.8,506.3 513.8,506.2 514.9,507.2 515.9,507.4 516.9,506.6 518.0,505.6 519.0,506.4 520.0,506.5 521.1,507.5 522.1,507.0 523.1,505.7 524.2,505.0 525.2,506.2 526.2,505.7 527.3,505.3 528.3,506.5 529.3,506.1 530.4,506.8 531.4,507.3 532.4,506.2 533.5,509.5 534.5,506.3 535.5,508.0 536.6,506.8 537.6,508.1 538.6,503.8 539.7,505.8 540.7,507.0 541.7,507.4 542.8,509.6 543.8,507.1 544.8,508.3 545.9,507.7 546.9,507.9 547.9,507.3 549.0,506.5 550.0,507.4 551.0,505.4 552.1,508.2 553.1,505.5 554.1,507.0 555.2,509.3 556.2,506.5 557.2,506.8 558.3,508.2 559.3,506.8 560.3,505.8 561.4,507.1 562.4,507.5 563.4,507.6 564.5,505.8 565.5,508.9 566.5,508.8 567.6,506.8 568.6,507.1 569.6,506.2 570.7,508.5 571.7,505.9 572.8,507.6 573.8,506.2 574.8,505.9 575.9,507.7 576.9,508.4 577.9,506.8 579.0,506.0 580.0,507.8 581.0,506.7 582.1,507.2 583.1,508.7 584.1,508.2 585.2,506.2 586.2,509.6 587.2,506.8 588.3,507.8 589.3,506.0 590.3,506.8 591.4,504.7 592.4,509.0 593.4,508.5 594.5,505.3 595.5,505.0 596.5,504.8 597.6,508.3 598.6,506.3 599.6,506.8 600.7,506.5 601.7,506.7 602.7,505.5 603.8,506.9 604.8,505.1 605.8,506.8 606.9,507.2 607.9,507.4 608.9,506.6 610.0,505.7 611.0,507.1 612.0,506.3 613.1,508.8 614.1,507.8 615.1,506.7 616.2,506.3 617.2,506.0 618.2,505.7 619.3,506.4 620.3,507.2 621.3,507.5 622.4,507.6 623.4,509.5 624.4,506.0 625.5,506.9 626.5,510.3 627.5,504.6 628.6,506.2 629.6,507.1 630.6,507.1 631.7,507.4 632.7,506.6 633.7,507.3 634.8,507.0 635.8,507.9 636.8,504.6 637.9,505.8 638.9,506.9 640.0,505.6 641.0,505.6 642.0,507.7 643.1,506.1 644.1,507.7 645.1,507.8 646.2,507.3 647.2,507.5 648.2,506.8 649.3,505.2 650.3,506.9 651.3,507.5 652.4,506.3 653.4,506.8 654.4,507.8 655.5,505.8 656.5,507.7 657.5,509.2 658.6,506.2 659.6,507.1 660.6,506.7 661.7,508.8 662.7,507.3 663.7,508.0 664.8,506.1 665.8,506.9 666.8,506.9 667.9,504.8 668.9,508.7 669.9,508.1 671.0,504.8 672.0,507.9 673.0,506.8 674.1,507.5 675.1,507.4 676.1,505.1 677.2,506.7 678.2,508.8 679.2,506.2 680.3,505.7 681.3,505.3 682.3,505.5 683.4,507.4 684.4,509.0 685.4,507.5 686.5,507.3 687.5,509.7 688.5,506.3 689.6,506.1 690.6,507.6 691.6,507.6 692.7,505.7 693.7,505.5 694.7,507.3 695.8,507.3 696.8,505.4 697.8,506.7 698.9,506.3 699.9,507.5 700.9,506.8 702.0,506.9 703.0,506.5 704.0,508.3 705.1,508.7 706.1,506.5 707.2,508.0 708.2,506.0 709.2,507.1 710.3,507.9 711.3,508.8 712.3,506.5 713.4,506.9 714.4,507.2 715.4,505.1 716.5,507.0 717.5,506.2 718.5,507.4 719.6,505.6 720.6,504.6 721.6,507.0 722.7,507.3 723.7,506.3 724.7,508.1 725.8,506.7 726.8,506.2 727.8,507.6 728.9,505.1 729.9,506.2 730.9,507.0 732.0,508.0 733.0,506.8 734.0,507.4 735.1,506.2 736.1,507.4 737.1,509.0 738.2,506.2 739.2,509.9 740.2,506.2 741.3,507.0 742.3,507.2 743.3,508.3 744.4,505.5 745.4,504.4 746.4,507.8 747.5,508.0 748.5,507.8 749.5,510.2 750.6,507.3 751.6,507.3 752.6,508.2 753.7,507.5 754.7,509.1 755.7,505.5 756.8,506.5 757.8,502.8 758.8,508.0 759.9,506.6 760.9,508.2 761.9,509.7 763.0,507.0 764.0,506.7 765.0,506.4 766.1,506.0 767.1,506.2 768.1,507.8 769.2,507.1 770.2,507.1 771.2,506.8 772.3,508.1 773.3,507.6 774.4,506.8 775.4,507.8 776.4,506.8 777.5,505.6 778.5,508.8 779.5,507.6 780.6,505.8 781.6,508.4 782.6,507.4 783.7,505.1 784.7,509.0 785.7,507.4 786.8,508.1 787.8,507.3 788.8,506.8 789.9,505.1 790.9,508.2 791.9,507.1 793.0,506.7 794.0,507.5 795.0,507.1 796.1,507.9 797.1,506.6 798.1,507.0 799.2,504.4 800.2,506.5 801.2,507.9 802.3,508.7 803.3,506.6 804.3,506.9 805.4,509.0 806.4,506.6 807.4,507.9 808.5,509.1 809.5,507.1 810.5,508.5 811.6,506.2 812.6,507.3 813.6,506.9 814.7,507.2 815.7,508.4 816.7,510.0 817.8,506.2 818.8,506.3 819.8,507.6 820.9,505.7 821.9,507.6 822.9,507.7 824.0,506.7 825.0,507.7 826.0,505.1 827.1,508.0 828.1,505.1 829.1,506.2 830.2,506.4 831.2,506.5 832.2,508.1 833.3,507.1 834.3,506.6 835.3,507.7 836.4,509.0 837.4,507.1 838.4,507.5 839.5,508.6 840.5,507.4 841.6,505.5 842.6,510.1 843.6,509.8 844.7,504.6 845.7,507.0 846.7,507.6 847.8,508.2 848.8,507.9 849.8,506.7 850.9,505.7 851.9,507.2 852.9,508.3 854.0,505.7 855.0,505.8 856.0,507.0 857.1,504.7 858.1,506.7 859.1,506.5 860.2,507.6 861.2,506.2 862.2,506.0 863.3,506.6 864.3,507.0 865.3,506.2 866.4,507.1 867.4,508.0 868.4,508.5 869.5,509.1 870.5,506.1 871.5,506.5 872.6,504.0 873.6,509.4 874.6,506.2 875.7,507.0 876.7,507.7 877.7,505.4 878.8,507.6 879.8,507.0 880.8,504.8 881.9,507.4 882.9,508.5 883.9,504.8 885.0,508.0 886.0,507.3 887.0,507.6 888.1,507.6 889.1,508.7 890.1,506.8 891.2,508.1 892.2,506.6 893.2,508.0 894.3,506.1 895.3,506.9 896.3,509.2 897.4,507.6 898.4,506.9 899.4,505.6 900.5,506.1 901.5,507.3 902.5,508.2 903.6,507.6 904.6,507.7 905.6,507.0 906.7,508.7 907.7,506.6 908.8,506.4 909.8,508.2 910.8,507.1 911.9,506.7 912.9,506.3 913.9,506.7 915.0,507.8 916.0,507.5 917.0,505.6 918.1,507.6 919.1,507.3 920.1,505.8 921.2,508.0 922.2,506.7 923.2,506.6 924.3,508.0 925.3,508.7 926.3,506.2 927.4,507.6 928.4,506.0 929.4,509.9 930.5,506.5 931.5,508.5 932.5,506.3 933.6,508.1 934.6,509.8 935.6,503.9 936.7,506.5 937.7,507.7 938.7,506.9 939.8,506.2 940.8,509.7 941.8,507.2 942.9,505.0 943.9,508.1 944.9,504.9 946.0,508.5 947.0,506.4 948.0,507.2 949.1,508.6 950.1,507.2 951.1,505.4 952.2,505.0 953.2,508.5 954.2,508.0 955.3,506.1 956.3,508.1 957.3,507.7 958.4,507.9 959.4,504.3 960.4,506.7 961.5,508.2 962.5,508.0 963.5,508.1 964.6,504.0 965.6,507.3 966.6,507.7 967.7,510.2 968.7,505.9 969.7,506.7 970.8,507.1 971.8,508.2 972.8,506.5 973.9,508.5 974.9,506.1 976.0,507.4 977.0,506.4 978.0,507.3 979.1,506.2 980.1,505.1 981.1,508.4 982.2,507.4 983.2,506.4 984.2,507.3 985.3,508.3 986.3,505.9 987.3,506.9 988.4,507.7 989.4,507.7 990.4,506.7 991.5,504.5 992.5,508.6 993.5,507.5 994.6,507.1 995.6,506.7 996.6,507.4 997.7,506.5 998.7,505.8 999.7,506.2 1000.8,506.3 1001.8,506.3 1002.8,505.6 1003.9,507.9 1004.9,505.5 1005.9,507.9 1007.0,505.8 1008.0,507.5 1009.0,508.8 1010.1,507.3 1011.1,506.2 1012.1,507.1 1013.2,507.3 1014.2,504.9 1015.2,506.3 1016.3,507.3 1017.3,506.5 1018.3,507.2 1019.4,508.0 1020.4,508.0 1021.4,508.2 1022.5,507.8 1023.5,506.7 1024.5,507.0 1025.6,506.7 1026.6,506.7 1027.6,506.8 1028.7,504.9 1029.7,506.7 1030.7,507.0 1031.8,505.9 1032.8,507.0 1033.8,507.7 1034.9,506.9 1035.9,509.6 1036.9,503.9 1038.0,506.8 1039.0,504.8 1040.0,508.3 1041.1,510.3 1042.1,504.0 1043.2,507.2 1044.2,507.7 1045.2,506.7 1046.3,507.7 1047.3,504.3 1048.3,508.1 1049.4,507.5 1050.4,507.1 1051.4,506.3 1052.5,507.9 1053.5,506.5 1054.5,507.3 1055.6,506.4 1056.6,504.3 1057.6,507.0 1058.7,507.3 1059.7,508.0 1060.7,506.0 1061.8,507.0 1062.8,507.8 1063.8,507.3 1064.9,508.6 1065.9,509.5 1066.9,506.0 1068.0,504.7 1069.0,508.1 1070.0,509.0 1071.1,508.2 1072.1,508.1 1073.1,506.3 1074.2,506.2 1075.2,508.2 1076.2,506.0 1077.3,504.8 1078.3,505.8 1079.3,510.1 1080.4,509.4 1081.4,506.2 1082.4,506.2 1083.5,507.4 1084.5,506.2 1085.5,508.7 1086.6,507.0 1087.6,505.7 1088.6,508.7 1089.7,506.4 1090.7,507.3 1091.7,507.1 1092.8,506.7 1093.8,507.5 1094.8,506.2 1095.9,504.8 1096.9,504.4 1097.9,505.5 1099.0,506.1 1100.0,507.0 1101.0,507.1 1102.1,507.8 1103.1,507.2 1104.1,506.1 1105.2,506.2 1106.2,504.5 1107.2,506.9 1108.3,507.7 1109.3,507.7 1110.4,506.9 1111.4,506.9 1112.4,508.2 1113.5,507.1 1114.5,508.0 1115.5,507.8 1116.6,507.3 1117.6,508.7 1118.6,506.4 1119.7,506.6 1120.7,506.1 1121.7,506.1 1122.8,509.0 1123.8,509.2 1124.8,507.1 1125.9,507.8 1126.9,508.5 1127.9,508.1 1129.0,508.6 1130.0,505.5 1131.0,506.3 1132.1,507.6 1133.1,508.8 1134.1,507.2 1135.2,506.0 1136.2,506.6 1137.2,506.3 1138.3,506.0 1139.3,508.9 1140.3,506.3 1141.4,507.1 1142.4,509.7 1143.4,508.5 1144.5,507.5 1145.5,506.3 1146.5,507.6 1147.6,509.1 1148.6,507.8 1149.6,508.6 1150.7,507.2 1151.7,507.7 1152.7,506.8 1153.8,507.6 1154.8,508.7 1155.8,505.3 1156.9,507.0 1157.9,507.4 1158.9,506.4 1160.0,506.7 1161.0,508.0 1162.0,509.5 1163.1,507.8 1164.1,507.5 1165.1,505.2 1166.2,509.4 1167.2,507.2 1168.2,507.0 1169.3,505.7 1170.3,507.0 1171.3,505.7 1172.4,507.2 1173.4,507.6 1174.4,507.1 1175.5,507.4 1176.5,506.0 1177.6,508.8 1178.6,506.3 1179.6,504.8 1180.7,506.8 1181.7,506.1 1182.7,505.8 1183.8,506.6 1184.8,507.4 1185.8,505.6 1186.9,506.9 1187.9,508.8 1188.9,507.9 1190.0,506.9 1191.0,507.2 1192.0,506.9 1193.1,507.0 1194.1,508.0 1195.1,507.0 1196.2,504.1 1197.2,507.0 1198.2,506.0 1199.3,507.9 1200.3,506.3 1201.3,507.3 1202.4,509.8 1203.4,505.8 1204.4,505.7 1205.5,505.3 1206.5,504.1 1207.5,504.8 1208.6,507.5 1209.6,506.3 1210.6,504.8 1211.7,505.3 1212.7,507.8 1213.7,506.1 1214.8,506.6 1215.8,507.5 1216.8,508.7 1217.9,509.5 1218.9,508.3 1219.9,507.3 1221.0,507.3 1222.0,509.3 1223.0,508.8 1224.1,506.7 1225.1,507.6 1226.1,507.4 1227.2,507.1 1228.2,506.5 1229.2,505.4 1230.3,506.4 1231.3,505.2 1232.3,508.6 1233.4,507.7 1234.4,505.6 1235.4,508.8 1236.5,508.2 1237.5,504.7 1238.5,509.3 1239.6,508.1 1240.6,509.6 1241.6,505.6 1242.7,507.7 1243.7,507.6 1244.8,507.3 1245.8,507.3 1246.8,508.4 1247.9,505.2 1248.9,505.5 1249.9,505.4 1251.0,506.4 1252.0,506.3 1253.0,507.5 1254.1,507.4 1255.1,507.1 1256.1,506.2 1257.2,506.5 1258.2,508.2 1259.2,508.0 1260.3,507.2 1261.3,506.7 1262.3,509.0 1263.4,506.3 1264.4,507.9 1265.4,508.5 1266.5,506.7 1267.5,508.1 1268.5,505.7 1269.6,508.3 1270.6,507.3 1271.6,505.1 1272.7,507.9 1273.7,506.0 1274.7,508.7 1275.8,506.2 1276.8,506.9 1277.8,507.4 1278.9,506.7 1279.9,507.4 1280.9,506.4 1282.0,507.9 1283.0,507.1 1284.0,507.3 1285.1,503.7 1286.1,508.5 1287.1,507.1 1288.2,504.9 1289.2,507.2 1290.2,507.7 1291.3,508.4 1292.3,505.7 1293.3,509.0 1294.4,506.9 1295.4,510.0 1296.4,506.9 1297.5,507.9 1298.5,506.6 1299.5,505.7 1300.6,508.4 1301.6,508.2 1302.6,509.0 1303.7,508.1 1304.7,506.4 1305.7,505.0 1306.8,506.3 1307.8,506.2 1308.8,506.1 1309.9,507.8 1310.9,507.5 1312.0,506.7 1313.0,507.3 1314.0,506.9 1315.1,507.3 1316.1,508.0 1317.1,508.3 1318.2,506.2 1319.2,505.2 1320.2,508.8 1321.3,507.2 1322.3,508.4 1323.3,505.1 1324.4,506.7 1325.4,507.1 1326.4,505.3 1327.5,506.4 1328.5,508.0 1329.5,508.4 1330.6,509.0 1331.6,506.0 1332.6,505.4 1333.7,507.7 1334.7,508.2 1335.7,507.3 1336.8,505.5 1337.8,508.0 1338.8,508.1 1339.9,507.8 1340.9,506.5 1341.9,507.5 1343.0,508.0 1344.0,506.4 1345.0,504.8 1346.1,507.5 1347.1,507.7 1348.1,507.1 1349.2,508.2 1350.2,506.4 1351.2,507.0 1352.3,506.7 1353.3,507.8 1354.3,509.0 1355.4,506.8 1356.4,509.6 1357.4,509.0 1358.5,508.0 1359.5,507.8 1360.5,509.3 1361.6,506.9 1362.6,506.9 1363.6,505.8 1364.7,507.7 1365.7,508.7 1366.7,507.7 1367.8,507.6 1368.8,506.8 1369.8,507.3 1370.9,505.3 1371.9,508.4 1372.9,506.6 1374.0,505.7 1375.0,506.2 1376.0,506.1 1377.1,508.1 1378.1,508.4 1379.2,505.4 1380.2,508.2 1381.2,508.2 1382.3,506.4 1383.3,505.2 1384.3,506.2 1385.4,506.3 1386.4,507.5 1387.4,506.6 1388.5,504.6 1389.5,507.4 1390.5,505.2 1391.6,508.2 1392.6,505.6 1393.6,506.2 1394.7,506.0 1395.7,506.4 1396.7,508.7 1397.8,508.1 1398.8,507.8 1399.8,507.5 1400.9,505.2 1401.9,506.4 1402.9,506.4 1404.0,505.9 1405.0,507.7 1406.0,506.2 1407.1,506.2 1408.1,505.8 1409.1,504.5 1410.2,507.8 1411.2,508.7 1412.2,507.3 1413.3,505.9 1414.3,503.7 1415.3,507.3 1416.4,508.6 1417.4,507.4 1418.4,508.2 1419.5,508.9 1420.5,508.5 1421.5,506.5 1422.6,508.4 1423.6,508.0 1424.6,505.2 1425.7,506.6 1426.7,505.3 1427.7,506.9 1428.8,507.8 1429.8,505.8 1430.8,504.5 1431.9,508.7 1432.9,507.5 1433.9,508.9 1435.0,505.4 1436.0,508.4 1437.0,509.6 1438.1,509.5 1439.1,506.8 1440.1,507.4 1441.2,506.9 1442.2,508.3 1443.2,508.4 1444.3,507.2 1445.3,505.4 1446.4,508.0 1447.4,506.5 1448.4,507.9 1449.5,507.4 1450.5,509.1 1451.5,508.5 1452.6,506.5 1453.6,507.5 1454.6,509.2 1455.7,506.4 1456.7,507.6 1457.7,508.5 1458.8,508.6 1459.8,507.7 1460.8,505.5 1461.9,505.5 1462.9,507.4 1463.9,507.6 1465.0,510.2 1466.0,506.0 1467.0,508.5 1468.1,508.0 1469.1,505.0 1470.1,506.1 1471.2,507.3 1472.2,506.5 1473.2,506.9 1474.3,507.7 1475.3,506.1 1476.3,507.7 1477.4,506.3 1478.4,506.4 1479.4,507.7 1480.5,506.4 1481.5,507.4 1482.5,509.0 1483.6,507.1 1484.6,506.9 1485.6,508.0 1486.7,506.6 1487.7,508.4 1488.7,505.5 1489.8,507.8 1490.8,506.4 1491.8,506.1 1492.9,509.3 1493.9,506.0 1494.9,509.2 1496.0,507.9 1497.0,508.9 1498.0,505.9 1499.1,508.6 1500.1,508.9 1501.1,506.9 1502.2,506.9 1503.2,510.1 1504.2,507.3 1505.3,506.6 1506.3,506.3 1507.3,507.6 1508.4,507.5 1509.4,507.3 1510.4,509.2 1511.5,506.7 1512.5,507.7 1513.6,508.9 1514.6,505.8 1515.6,508.4 1516.7,509.3 1517.7,505.4 1518.7,505.7 1519.8,505.8 1520.8,504.8 1521.8,507.6 1522.9,504.8 1523.9,507.7 1524.9,508.9 1526.0,505.1 1527.0,506.7 1528.0,504.7 1529.1,508.0 1530.1,506.2 1531.1,506.7 1532.2,507.1 1533.2,507.7 1534.2,506.7 1535.3,507.1 1536.3,506.4 1537.3,507.2 1538.4,505.6 1539.4,507.2 1540.4,504.7 1541.5,506.5 1542.5,509.4 1543.5,507.2 1544.6,505.5 1545.6,507.4 1546.6,505.9 1547.7,505.0 1548.7,506.2 1549.7,508.0 1550.8,507.5 1551.8,507.0 1552.8,505.9 1553.9,505.7 1554.9,508.7 1555.9,507.4 1557.0,505.9 1558.0,504.5 1559.0,505.4 1560.1,510.1 1561.1,505.7 1562.1,507.0 1563.2,507.3 1564.2,506.9 1565.2,506.7 1566.3,505.4 1567.3,505.8 1568.3,509.2 1569.4,506.1 1570.4,508.1 1571.4,505.0 1572.5,506.7 1573.5,507.4 1574.5,508.4 1575.6,505.7 1576.6,507.8 1577.6,507.6 1578.7,506.2 1579.7,507.7 1580.8,506.0 1581.8,506.1 1582.8,507.1 1583.9,503.7 1584.9,506.9 1585.9,505.8 1587.0,505.3 1588.0,506.6 1589.0,508.0 1590.1,506.6 1591.1,508.6 1592.1,505.6 1593.2,505.5 1594.2,509.0 1595.2,507.6 1596.3,508.2 1597.3,506.1 1598.3,508.1 1599.4,507.4 1600.4,507.9 1601.4,507.1 1602.5,508.6 1603.5,506.3 1604.5,505.9 1605.6,505.3 1606.6,508.5 1607.6,506.2 1608.7,505.8 1609.7,505.9 1610.7,506.5" fill="none" stroke="#8ae6e6" stroke-width="1.5" stroke-linejoin="round"/><polyline points="0.0,321.9 1.0,323.1 2.1,322.7 3.1,322.8 4.1,322.3 5.2,323.5 6.2,322.9 7.2,323.6 8.3,323.8 9.3,323.9 10.3,320.8 11.4,322.8 12.4,322.5 13.4,324.4 14.5,321.5 15.5,322.6 16.5,323.1 17.6,323.0 18.6,324.7 19.6,322.9 20.7,324.6 21.7,321.6 22.7,321.2 23.8,324.9 24.8,324.0 25.8,324.0 26.9,323.6 27.9,324.0 28.9,321.9 30.0,324.6 31.0,322.8 32.0,324.7 33.1,323.6 34.1,321.0 35.2,321.9 36.2,324.8 37.2,323.3 38.3,323.0 39.3,323.7 40.3,322.9 41.4,322.8 42.4,323.6 43.4,323.6 44.5,325.3 45.5,323.5 46.5,325.8 47.6,325.7 48.6,325.6 49.6,324.8 50.7,323.6 51.7,323.6 52.7,323.3 53.8,322.5 54.8,323.4 55.8,322.7 56.9,325.5 57.9,324.1 58.9,322.9 60.0,321.1 61.0,323.4 62.0,322.9 63.1,322.1 64.1,322.0 65.1,320.7 66.2,324.1 67.2,323.4 68.2,326.6 69.3,323.4 70.3,323.3 71.3,325.2 72.4,323.6 73.4,323.7 74.4,323.0 75.5,322.7 76.5,325.3 77.5,324.7 78.6,325.6 79.6,323.0 80.6,323.5 81.7,322.4 82.7,324.6 83.7,321.7 84.8,324.1 85.8,324.8 86.8,325.2 87.9,322.3 88.9,324.8 89.9,322.6 91.0,322.5 92.0,321.8 93.0,324.9 94.1,325.5 95.1,322.7 96.1,322.5 97.2,323.0 98.2,326.5 99.2,324.7 100.3,322.8 101.3,321.2 102.4,322.6 103.4,324.9 104.4,325.7 105.5,323.1 106.5,322.6 107.5,322.8 108.6,321.1 109.6,324.6 110.6,322.1 111.7,324.8 112.7,321.3 113.7,321.9 114.8,323.8 115.8,322.5 116.8,324.4 117.9,323.5 118.9,322.0 119.9,324.2 121.0,324.5 122.0,321.1 123.0,325.7 124.1,324.1 125.1,324.4 126.1,321.2 127.2,322.6 128.2,323.0 129.2,324.8 130.3,321.6 131.3,322.4 132.3,320.9 133.4,323.1 134.4,323.9 135.4,321.4 136.5,322.7 137.5,324.1 138.5,325.4 139.6,324.3 140.6,323.1 141.6,322.0 142.7,322.3 143.7,322.6 144.7,323.6 145.8,323.4 146.8,325.5 147.8,323.8 148.9,322.1 149.9,325.3 150.9,324.6 152.0,323.6 153.0,322.6 154.0,291.5 155.1,248.1 156.1,206.0 157.1,197.6 158.2,199.0 159.2,202.6 160.2,204.0 161.3,205.5 162.3,206.4 163.3,208.0 164.4,205.7 165.4,208.4 166.4,206.3 167.5,208.6 168.5,208.2 169.6,208.4 170.6,209.4 171.6,208.3 172.7,209.8 173.7,209.6 174.7,208.7 175.8,207.9 176.8,207.7 177.8,208.0 178.9,208.4 179.9,208.6 180.9,212.4 182.0,209.5 183.0,209.7 184.0,207.7 185.1,207.8 186.1,208.3 187.1,209.0 188.2,207.5 189.2,210.7 190.2,208.0 191.3,210.1 192.3,205.9 193.3,208.7 194.4,209.1 195.4,209.0 196.4,209.5 197.5,209.1 198.5,208.9 199.5,206.4 200.6,207.9 201.6,205.9 202.6,196.0 203.7,169.8 204.7,147.2 205.7,147.0 206.8,147.8 207.8,151.2 208.8,151.5 209.9,149.7 210.9,151.8 211.9,148.7 213.0,148.7 214.0,150.9 215.0,150.8 216.1,151.7 217.1,153.1 218.1,157.0 219.2,153.0 220.2,154.3 221.2,155.0 222.3,155.0 223.3,156.5 224.3,157.7 225.4,154.2 226.4,156.0 227.4,155.5 228.5,156.2 229.5,153.7 230.5,153.2 231.6,152.2 232.6,155.3 233.6,154.5 234.7,153.9 235.7,150.5 236.8,152.5 237.8,151.6 238.8,150.4 239.9,150.6 240.9,152.3 241.9,151.8 243.0,150.8 244.0,151.2 245.0,149.7 246.1,150.3 247.1,150.1 248.1,150.7 249.2,149.8 250.2,149.6 251.2,149.6 252.3,148.9 253.3,152.4 254.3,150.3 255.4,150.1 256.4,152.4 257.4,151.3 258.5,147.6 259.5,150.4 260.5,150.5 261.6,151.8 262.6,151.1 263.6,150.4 264.7,148.0 265.7,148.4 266.7,149.7 267.8,150.0 268.8,148.1 269.8,148.9 270.9,148.9 271.9,149.4 272.9,149.8 274.0,149.0 275.0,147.8 276.0,150.8 277.1,151.3 278.1,149.1 279.1,150.5 280.2,149.8 281.2,150.1 282.2,149.8 283.3,148.3 284.3,149.9 285.3,150.4 286.4,148.1 287.4,151.6 288.4,151.7 289.5,151.4 290.5,151.6 291.5,150.0 292.6,148.7 293.6,148.4 294.6,148.1 295.7,149.2 296.7,149.0 297.7,149.9 298.8,146.6 299.8,151.9 300.8,151.8 301.9,149.0 302.9,149.8 304.0,149.6 305.0,149.3 306.0,148.7 307.1,148.8 308.1,147.9 309.1,149.2 310.2,148.9 311.2,149.3 312.2,147.9 313.3,148.9 314.3,148.9 315.3,149.6 316.4,147.6 317.4,149.4 318.4,150.1 319.5,149.6 320.5,148.4 321.5,148.2 322.6,148.5 323.6,149.7 324.6,150.7 325.7,148.6 326.7,148.0 327.7,149.2 328.8,149.0 329.8,147.6 330.8,147.8 331.9,148.6 332.9,149.5 333.9,147.2 335.0,147.4 336.0,149.3 337.0,147.2 338.1,148.8 339.1,149.1 340.1,148.5 341.2,147.4 342.2,148.6 343.2,148.2 344.3,149.0 345.3,147.6 346.3,149.9 347.4,146.5 348.4,148.4 349.4,148.6 350.5,149.7 351.5,147.8 352.5,149.2 353.6,147.8 354.6,149.4 355.6,150.7 356.7,148.0 357.7,149.1 358.7,147.4 359.8,149.7 360.8,150.0 361.8,148.5 362.9,147.1 363.9,149.0 364.9,149.9 366.0,149.8 367.0,149.4 368.0,146.2 369.1,147.6 370.1,150.2 371.2,146.9 372.2,149.8 373.2,150.7 374.3,149.3 375.3,149.8 376.3,148.0 377.4,146.9 378.4,148.2 379.4,148.1 380.5,148.3 381.5,149.2 382.5,148.2 383.6,148.6 384.6,148.8 385.6,148.3 386.7,150.6 387.7,148.8 388.7,148.4 389.8,148.0 390.8,147.5 391.8,149.9 392.9,148.5 393.9,146.9 394.9,147.6 396.0,148.1 397.0,147.7 398.0,149.6 399.1,146.8 400.1,148.8 401.1,148.4 402.2,146.8 403.2,148.3 404.2,148.1 405.3,148.8 406.3,147.6 407.3,148.6 408.4,146.1 409.4,146.8 410.4,149.1 411.5,149.4 412.5,148.1 413.5,147.4 414.6,149.5 415.6,145.6 416.6,147.1 417.7,149.0 418.7,148.9 419.7,146.8 420.8,145.8 421.8,149.9 422.8,148.3 423.9,147.0 424.9,148.2 425.9,149.2 427.0,144.9 428.0,149.4 429.0,149.0 430.1,145.5 431.1,149.0 432.1,145.9 433.2,149.4 434.2,148.5 435.2,150.8 436.3,147.3 437.3,148.0 438.4,149.3 439.4,147.2 440.4,147.1 441.5,147.5 442.5,147.9 443.5,146.7 444.6,148.6 445.6,148.7 446.6,148.1 447.7,150.1 448.7,147.6 449.7,149.6 450.8,147.3 451.8,148.9 452.8,145.6 453.9,148.2 454.9,147.7 455.9,147.3 457.0,147.2 458.0,147.5 459.0,147.0 460.1,145.2 461.1,147.2 462.1,147.2 463.2,147.3 464.2,146.6 465.2,147.7 466.3,148.9 467.3,147.6 468.3,147.3 469.4,149.6 470.4,149.1 471.4,149.0 472.5,149.3 473.5,147.5 474.5,147.7 475.6,149.2 476.6,147.2 477.6,147.7 478.7,148.3 479.7,148.3 480.7,147.5 481.8,149.0 482.8,147.6 483.8,148.7 484.9,149.1 485.9,148.6 486.9,148.7 488.0,146.4 489.0,146.2 490.0,147.0 491.1,148.4 492.1,149.6 493.1,146.3 494.2,148.2 495.2,146.7 496.2,146.9 497.3,147.4 498.3,148.6 499.3,148.0 500.4,149.2 501.4,146.6 502.4,148.9 503.5,148.9 504.5,147.8 505.6,148.3 506.6,147.1 507.6,146.4 508.7,147.2 509.7,147.0 510.7,151.3 511.8,147.1 512.8,149.8 513.8,148.0 514.9,148.1 515.9,148.6 516.9,146.8 518.0,148.8 519.0,148.2 520.0,145.8 521.1,148.4 522.1,148.4 523.1,148.3 524.2,149.6 525.2,147.2 526.2,148.3 527.3,148.6 528.3,146.6 529.3,149.2 530.4,145.9 531.4,146.1 532.4,148.3 533.5,146.3 534.5,147.5 535.5,145.6 536.6,147.7 537.6,146.3 538.6,148.1 539.7,145.8 540.7,148.2 541.7,147.3 542.8,147.7 543.8,147.6 544.8,147.8 545.9,146.0 546.9,144.5 547.9,147.7 549.0,146.5 550.0,147.1 551.0,148.2 552.1,145.2 553.1,146.7 554.1,146.9 555.2,146.3 556.2,148.0 557.2,147.4 558.3,146.6 559.3,146.4 560.3,148.6 561.4,146.8 562.4,148.3 563.4,148.1 564.5,145.3 565.5,146.3 566.5,147.6 567.6,148.0 568.6,148.5 569.6,148.6 570.7,148.9 571.7,147.1 572.8,147.3 573.8,148.5 574.8,147.0 575.9,148.9 576.9,145.6 577.9,148.4 579.0,147.3 580.0,145.1 581.0,148.8 582.1,147.9 583.1,147.6 584.1,146.2 585.2,147.0 586.2,149.4 587.2,146.5 588.3,143.3 589.3,146.5 590.3,146.1 591.4,147.4 592.4,147.1 593.4,146.4 594.5,146.5 595.5,148.8 596.5,145.8 597.6,149.9 598.6,146.9 599.6,146.2 600.7,148.5 601.7,148.2 602.7,146.2 603.8,148.4 604.8,145.2 605.8,146.4 606.9,148.9 607.9,147.2 608.9,145.9 610.0,148.1 611.0,148.6 612.0,147.5 613.1,145.3 614.1,147.1 615.1,148.0 616.2,148.4 617.2,149.8 618.2,147.2 619.3,146.9 620.3,147.4 621.3,149.0 622.4,146.3 623.4,149.1 624.4,144.1 625.5,148.5 626.5,146.6 627.5,148.0 628.6,148.3 629.6,146.0 630.6,147.4 631.7,147.8 632.7,148.2 633.7,146.3 634.8,146.2 635.8,145.1 636.8,150.6 637.9,147.2 638.9,147.2 640.0,145.6 641.0,148.6 642.0,146.8 643.1,149.2 644.1,148.5 645.1,147.5 646.2,148.3 647.2,146.1 648.2,147.0 649.3,146.7 650.3,145.9 651.3,147.5 652.4,147.3 653.4,149.2 654.4,143.3 655.5,146.6 656.5,146.3 657.5,146.9 658.6,147.9 659.6,147.9 660.6,147.5 661.7,146.8 662.7,148.0 663.7,147.9 664.8,145.2 665.8,147.1 666.8,145.7 667.9,146.0 668.9,147.6 669.9,147.5 671.0,147.6 672.0,146.3 673.0,147.2 674.1,146.3 675.1,147.9 676.1,148.3 677.2,149.6 678.2,149.0 679.2,146.4 680.3,146.8 681.3,146.2 682.3,147.8 683.4,149.8 684.4,148.3 685.4,144.7 686.5,145.8 687.5,145.8 688.5,148.0 689.6,147.4 690.6,147.8 691.6,149.6 692.7,146.4 693.7,146.3 694.7,149.8 695.8,147.8 696.8,146.4 697.8,144.9 698.9,145.5 699.9,144.4 700.9,147.5 702.0,147.4 703.0,148.6 704.0,147.2 705.1,146.5 706.1,146.5 707.2,149.7 708.2,145.2 709.2,147.6 710.3,147.4 711.3,148.1 712.3,146.9 713.4,148.0 714.4,148.4 715.4,147.2 716.5,146.8 717.5,147.1 718.5,146.2 719.6,147.1 720.6,147.0 721.6,147.6 722.7,149.0 723.7,149.0 724.7,146.8 725.8,148.1 726.8,147.7 727.8,148.3 728.9,147.4 729.9,147.7 730.9,146.8 732.0,146.4 733.0,148.4 734.0,148.9 735.1,148.2 736.1,147.9 737.1,147.7 738.2,146.8 739.2,145.1 740.2,148.2 741.3,147.6 742.3,146.7 743.3,146.2 744.4,148.9 745.4,145.1 746.4,149.5 747.5,148.1 748.5,150.3 749.5,146.5 750.6,147.3 751.6,146.7 752.6,147.5 753.7,147.1 754.7,146.4 755.7,148.7 756.8,146.4 757.8,146.7 758.8,148.0 759.9,146.7 760.9,146.8 761.9,147.8 763.0,146.9 764.0,145.8 765.0,147.2 766.1,147.1 767.1,149.4 768.1,146.0 769.2,148.5 770.2,146.4 771.2,146.9 772.3,146.9 773.3,147.7 774.4,148.4 775.4,149.5 776.4,146.5 777.5,149.0 778.5,148.5 779.5,148.3 780.6,146.4 781.6,148.4 782.6,147.2 783.7,147.7 784.7,147.0 785.7,148.1 786.8,148.7 787.8,148.7 788.8,147.1 789.9,148.5 790.9,149.1 791.9,146.2 793.0,149.1 794.0,145.7 795.0,148.0 796.1,148.0 797.1,149.1 798.1,147.6 799.2,146.7 800.2,146.3 801.2,145.8 802.3,148.2 803.3,147.0 804.3,146.4 805.4,148.0 806.4,146.4 807.4,146.8 808.5,146.7 809.5,149.3 810.5,149.1 811.6,147.1 812.6,145.4 813.6,147.6 814.7,147.4 815.7,147.7 816.7,148.0 817.8,146.9 818.8,148.4 819.8,148.3 820.9,147.5 821.9,146.8 822.9,146.7 824.0,148.1 825.0,145.9 826.0,147.1 827.1,146.4 828.1,145.6 829.1,148.0 830.2,147.3 831.2,147.3 832.2,148.4 833.3,145.4 834.3,147.2 835.3,147.6 836.4,148.3 837.4,145.9 838.4,148.2 839.5,147.5 840.5,148.9 841.6,148.7 842.6,148.0 843.6,149.9 844.7,147.3 845.7,146.8 846.7,146.9 847.8,146.1 848.8,147.2 849.8,145.0 850.9,147.2 851.9,147.8 852.9,148.5 854.0,146.8 855.0,149.0 856.0,146.5 857.1,147.1 858.1,145.0 859.1,146.3 860.2,146.3 861.2,149.1 862.2,147.9 863.3,145.9 864.3,147.9 865.3,147.8 866.4,147.0 867.4,147.3 868.4,146.9 869.5,146.6 870.5,145.1 871.5,147.2 872.6,148.8 873.6,149.0 874.6,146.9 875.7,146.4 876.7,147.0 877.7,148.3 878.8,147.7 879.8,146.6 880.8,147.7 881.9,147.0 882.9,147.9 883.9,146.8 885.0,145.5 886.0,147.3 887.0,148.2 888.1,145.9 889.1,147.1 890.1,148.3 891.2,146.8 892.2,146.5 893.2,149.7 894.3,148.3 895.3,148.5 896.3,146.1 897.4,149.2 898.4,145.3 899.4,146.6 900.5,148.1 901.5,148.8 902.5,146.1 903.6,146.5 904.6,147.5 905.6,144.9 906.7,148.0 907.7,147.9 908.8,146.7 909.8,147.9 910.8,148.2 911.9,147.6 912.9,147.9 913.9,149.1 915.0,146.7 916.0,147.4 917.0,146.6 918.1,148.5 919.1,146.8 920.1,147.8 921.2,147.4 922.2,147.3 923.2,149.3 924.3,147.1 925.3,148.9 926.3,148.2 927.4,148.8 928.4,147.1 929.4,148.4 930.5,148.1 931.5,146.5 932.5,147.6 933.6,147.1 934.6,147.2 935.6,148.8 936.7,146.4 937.7,145.2 938.7,145.2 939.8,146.7 940.8,146.5 941.8,147.3 942.9,147.9 943.9,149.3 944.9,147.6 946.0,147.8 947.0,146.4 948.0,147.9 949.1,148.9 950.1,148.8 951.1,144.9 952.2,148.3 953.2,149.1 954.2,148.2 955.3,145.5 956.3,146.9 957.3,147.9 958.4,147.7 959.4,146.3 960.4,146.2 961.5,148.4 962.5,145.7 963.5,148.9 964.6,147.3 965.6,147.6 966.6,145.7 967.7,146.5 968.7,148.1 969.7,145.5 970.8,149.7 971.8,145.6 972.8,145.8 973.9,147.3 974.9,147.8 976.0,148.1 977.0,146.8 978.0,147.0 979.1,147.0 980.1,146.6 981.1,144.2 982.2,148.4 983.2,147.5 984.2,147.4 985.3,146.5 986.3,147.5 987.3,147.2 988.4,147.1 989.4,148.5 990.4,145.2 991.5,147.5 992.5,146.0 993.5,146.9 994.6,149.0 995.6,146.0 996.6,147.1 997.7,146.5 998.7,148.4 999.7,146.1 1000.8,145.2 1001.8,147.8 1002.8,146.8 1003.9,146.9 1004.9,148.5 1005.9,146.2 1007.0,146.8 1008.0,147.4 1009.0,147.7 1010.1,146.6 1011.1,148.5 1012.1,149.9 1013.2,146.7 1014.2,149.4 1015.2,144.7 1016.3,148.9 1017.3,146.8 1018.3,147.4 1019.4,146.8 1020.4,146.5 1021.4,145.7 1022.5,146.8 1023.5,148.8 1024.5,148.6 1025.6,146.8 1026.6,146.6 1027.6,146.4 1028.7,145.8 1029.7,149.4 1030.7,148.0 1031.8,147.4 1032.8,146.6 1033.8,146.0 1034.9,148.8 1035.9,148.1 1036.9,146.1 1038.0,148.4 1039.0,145.9 1040.0,148.0 1041.1,146.1 1042.1,146.7 1043.2,147.8 1044.2,147.7 1045.2,148.4 1046.3,146.2 1047.3,149.1 1048.3,148.8 1049.4,147.2 1050.4,147.8 1051.4,146.3 1052.5,147.0 1053.5,145.7 1054.5,147.3 1055.6,147.5 1056.6,148.8 1057.6,148.3 1058.7,148.2 1059.7,146.8 1060.7,147.0 1061.8,146.8 1062.8,147.5 1063.8,144.9 1064.9,148.1 1065.9,145.4 1066.9,146.6 1068.0,147.2 1069.0,146.6 1070.0,149.2 1071.1,147.1 1072.1,149.1 1073.1,148.6 1074.2,146.6 1075.2,147.7 1076.2,148.8 1077.3,146.8 1078.3,147.3 1079.3,146.6 1080.4,147.3 1081.4,146.8 1082.4,147.3 1083.5,148.4 1084.5,148.9 1085.5,147.4 1086.6,147.5 1087.6,148.2 1088.6,146.9 1089.7,146.0 1090.7,148.5 1091.7,146.1 1092.8,148.3 1093.8,146.1 1094.8,149.4 1095.9,146.0 1096.9,148.2 1097.9,149.0 1099.0,146.1 1100.0,149.0 1101.0,146.2 1102.1,145.1 1103.1,148.1 1104.1,148.0 1105.2,147.0 1106.2,144.2 1107.2,147.2 1108.3,146.9 1109.3,146.8 1110.4,146.9 1111.4,145.1 1112.4,146.5 1113.5,149.3 1114.5,149.0 1115.5,146.8 1116.6,146.4 1117.6,147.7 1118.6,148.5 1119.7,148.1 1120.7,145.8 1121.7,147.4 1122.8,147.4 1123.8,148.9 1124.8,148.6 1125.9,147.8 1126.9,148.7 1127.9,146.7 1129.0,149.0 1130.0,146.7 1131.0,147.7 1132.1,148.3 1133.1,146.1 1134.1,146.4 1135.2,145.1 1136.2,147.4 1137.2,147.1 1138.3,146.8 1139.3,147.8 1140.3,144.7 1141.4,147.2 1142.4,147.3 1143.4,146.9 1144.5,148.2 1145.5,149.3 1146.5,146.7 1147.6,146.1 1148.6,146.5 1149.6,147.3 1150.7,147.9 1151.7,146.2 1152.7,148.4 1153.8,146.0 1154.8,148.2 1155.8,147.7 1156.9,147.8 1157.9,149.8 1158.9,146.9 1160.0,147.0 1161.0,147.8 1162.0,148.2 1163.1,145.6 1164.1,147.5 1165.1,146.3 1166.2,148.0 1167.2,148.8 1168.2,147.3 1169.3,147.1 1170.3,147.4 1171.3,143.7 1172.4,148.1 1173.4,147.9 1174.4,147.4 1175.5,146.7 1176.5,146.3 1177.6,147.0 1178.6,148.6 1179.6,147.1 1180.7,148.8 1181.7,144.2 1182.7,146.7 1183.8,147.5 1184.8,147.2 1185.8,145.2 1186.9,146.4 1187.9,148.7 1188.9,145.7 1190.0,146.0 1191.0,145.9 1192.0,146.6 1193.1,148.0 1194.1,147.9 1195.1,144.8 1196.2,148.9 1197.2,146.5 1198.2,146.5 1199.3,149.2 1200.3,147.1 1201.3,145.7 1202.4,146.5 1203.4,146.4 1204.4,146.0 1205.5,146.8 1206.5,148.2 1207.5,147.6 1208.6,145.6 1209.6,150.5 1210.6,146.0 1211.7,147.3 1212.7,147.2 1213.7,148.1 1214.8,146.8 1215.8,147.7 1216.8,149.7 1217.9,147.3 1218.9,145.9 1219.9,147.6 1221.0,146.3 1222.0,146.8 1223.0,147.4 1224.1,147.6 1225.1,146.9 1226.1,148.2 1227.2,147.0 1228.2,145.7 1229.2,148.2 1230.3,146.8 1231.3,148.6 1232.3,146.4 1233.4,147.9 1234.4,147.6 1235.4,144.0 1236.5,145.4 1237.5,145.9 1238.5,148.9 1239.6,145.0 1240.6,148.3 1241.6,148.5 1242.7,147.8 1243.7,148.0 1244.8,146.6 1245.8,147.2 1246.8,147.5 1247.9,147.7 1248.9,148.0 1249.9,147.0 1251.0,146.4 1252.0,146.5 1253.0,147.7 1254.1,145.2 1255.1,145.7 1256.1,146.7 1257.2,146.6 1258.2,146.9 1259.2,144.1 1260.3,146.8 1261.3,146.9 1262.3,148.1 1263.4,144.9 1264.4,146.8 1265.4,147.8 1266.5,147.8 1267.5,148.6 1268.5,148.5 1269.6,146.0 1270.6,148.0 1271.6,146.8 1272.7,146.3 1273.7,149.0 1274.7,146.5 1275.8,146.2 1276.8,146.7 1277.8,146.2 1278.9,148.4 1279.9,147.7 1280.9,148.9 1282.0,147.7 1283.0,146.5 1284.0,148.4 1285.1,146.4 1286.1,146.7 1287.1,147.0 1288.2,147.3 1289.2,148.6 1290.2,146.5 1291.3,147.6 1292.3,147.2 1293.3,145.7 1294.4,145.9 1295.4,146.9 1296.4,147.7 1297.5,147.6 1298.5,147.8 1299.5,147.3 1300.6,146.7 1301.6,147.7 1302.6,146.0 1303.7,145.6 1304.7,146.8 1305.7,145.5 1306.8,146.6 1307.8,146.3 1308.8,146.5 1309.9,147.2 1310.9,146.3 1312.0,146.7 1313.0,145.2 1314.0,147.4 1315.1,146.2 1316.1,147.7 1317.1,143.9 1318.2,146.3 1319.2,147.5 1320.2,144.3 1321.3,146.8 1322.3,147.3 1323.3,147.3 1324.4,145.4 1325.4,147.5 1326.4,147.4 1327.5,146.1 1328.5,148.1 1329.5,147.1 1330.6,147.2 1331.6,146.7 1332.6,147.9 1333.7,147.3 1334.7,148.6 1335.7,147.7 1336.8,146.5 1337.8,146.9 1338.8,148.3 1339.9,146.8 1340.9,147.7 1341.9,147.8 1343.0,147.0 1344.0,144.4 1345.0,147.4 1346.1,147.5 1347.1,147.4 1348.1,146.3 1349.2,148.6 1350.2,147.0 1351.2,146.5 1352.3,146.4 1353.3,147.6 1354.3,145.9 1355.4,146.0 1356.4,149.6 1357.4,148.8 1358.5,148.5 1359.5,148.8 1360.5,147.9 1361.6,145.2 1362.6,148.6 1363.6,148.7 1364.7,147.8 1365.7,144.9 1366.7,148.7 1367.8,148.8 1368.8,146.6 1369.8,147.4 1370.9,148.1 1371.9,147.1 1372.9,148.5 1374.0,147.3 1375.0,148.0 1376.0,147.3 1377.1,145.4 1378.1,146.0 1379.2,151.0 1380.2,147.5 1381.2,148.8 1382.3,148.6 1383.3,149.2 1384.3,147.9 1385.4,146.5 1386.4,147.2 1387.4,144.9 1388.5,147.0 1389.5,148.3 1390.5,144.6 1391.6,147.4 1392.6,148.2 1393.6,148.8 1394.7,146.1 1395.7,146.4 1396.7,145.0 1397.8,146.0 1398.8,147.8 1399.8,149.7 1400.9,145.8 1401.9,148.8 1402.9,147.7 1404.0,146.6 1405.0,149.8 1406.0,144.2 1407.1,147.1 1408.1,147.5 1409.1,149.7 1410.2,149.4 1411.2,149.9 1412.2,147.4 1413.3,148.4 1414.3,148.8 1415.3,147.8 1416.4,147.6 1417.4,147.0 1418.4,146.7 1419.5,145.7 1420.5,149.5 1421.5,146.7 1422.6,144.7 1423.6,147.5 1424.6,147.2 1425.7,147.4 1426.7,149.4 1427.7,147.1 1428.8,146.9 1429.8,146.3 1430.8,147.2 1431.9,146.7 1432.9,147.4 1433.9,150.9 1435.0,147.7 1436.0,146.2 1437.0,149.5 1438.1,148.2 1439.1,148.2 1440.1,148.1 1441.2,148.2 1442.2,148.0 1443.2,148.9 1444.3,148.4 1445.3,148.8 1446.4,146.6 1447.4,147.2 1448.4,146.3 1449.5,148.3 1450.5,148.2 1451.5,146.6 1452.6,147.9 1453.6,150.3 1454.6,148.7 1455.7,145.9 1456.7,147.1 1457.7,148.0 1458.8,147.2 1459.8,147.7 1460.8,148.6 1461.9,147.6 1462.9,145.9 1463.9,148.1 1465.0,147.1 1466.0,147.3 1467.0,146.5 1468.1,145.5 1469.1,145.7 1470.1,146.8 1471.2,145.9 1472.2,143.9 1473.2,148.6 1474.3,145.8 1475.3,146.3 1476.3,147.8 1477.4,144.3 1478.4,148.8 1479.4,146.3 1480.5,148.0 1481.5,146.6 1482.5,147.6 1483.6,147.3 1484.6,147.2 1485.6,145.0 1486.7,145.4 1487.7,147.2 1488.7,148.9 1489.8,146.5 1490.8,147.8 1491.8,147.4 1492.9,147.8 1493.9,148.4 1494.9,145.4 1496.0,147.5 1497.0,147.0 1498.0,146.8 1499.1,146.2 1500.1,146.3 1501.1,146.0 1502.2,145.9 1503.2,150.2 1504.2,149.2 1505.3,147.2 1506.3,148.1 1507.3,146.0 1508.4,143.9 1509.4,145.0 1510.4,147.4 1511.5,148.9 1512.5,147.2 1513.6,146.0 1514.6,146.9 1515.6,146.0 1516.7,145.5 1517.7,146.9 1518.7,146.7 1519.8,146.2 1520.8,146.1 1521.8,146.1 1522.9,147.5 1523.9,148.9 1524.9,146.9 1526.0,149.9 1527.0,145.3 1528.0,147.5 1529.1,145.8 1530.1,147.0 1531.1,147.3 1532.2,147.9 1533.2,148.6 1534.2,146.5 1535.3,145.7 1536.3,147.0 1537.3,147.6 1538.4,146.4 1539.4,148.3 1540.4,149.2 1541.5,145.5 1542.5,147.6 1543.5,148.4 1544.6,144.9 1545.6,147.4 1546.6,146.9 1547.7,145.5 1548.7,148.8 1549.7,147.5 1550.8,146.6 1551.8,147.7 1552.8,148.0 1553.9,148.1 1554.9,147.9 1555.9,147.7 1557.0,145.8 1558.0,146.7 1559.0,147.4 1560.1,143.9 1561.1,149.8 1562.1,146.7 1563.2,145.9 1564.2,145.0 1565.2,147.5 1566.3,147.2 1567.3,146.5 1568.3,146.7 1569.4,146.1 1570.4,146.3 1571.4,147.1 1572.5,146.4 1573.5,148.0 1574.5,147.0 1575.6,147.4 1576.6,147.7 1577.6,148.7 1578.7,147.9 1579.7,147.5 1580.8,147.0 1581.8,146.2 1582.8,146.8 1583.9,148.0 1584.9,147.5 1585.9,146.7 1587.0,145.6 1588.0,145.4 1589.0,147.6 1590.1,148.4 1591.1,147.6 1592.1,145.6 1593.2,146.9 1594.2,147.5 1595.2,146.1 1596.3,147.6 1597.3,147.0 1598.3,146.2 1599.4,145.7 1600.4,148.2 1601.4,147.6 1602.5,146.1 1603.5,146.0 1604.5,148.3 1605.6,147.9 1606.6,146.8 1607.6,149.1 1608.7,146.9 1609.7,145.9 1610.7,148.5" fill="none" stroke="#f2ec80" stroke-width="1.5" stroke-linejoin="round"/></svg>
<div class="t" style="left:253.29px;top:435.93px;height:13.80px;line-height:13.80px;font-size:11.5px;color:#b4cc78;text-shadow:0 0 1px #50d0e0">C</div>
<div style="left:263.88px;top:441.85px;width:7.63px;height:1.48px;background:#a8d8a0"></div>
<svg style="left:265.85px;top:768.00px;width:1624.62px;height:17.23px" viewBox="0 0 660 7"><path d="M2.4 5.0 L1.2 5.0 L2.4 1.2 L3.6 5.0Z" fill="#c8a0f0"/><path d="M4 3.4H124.8" stroke="#b0b0b0" stroke-width="0.5" stroke-dasharray="0.5 1.1"/><path d="M124.8 1.6v3.4" stroke="#2a9a8a" stroke-width="0.6"/><path d="M125.2 3.3H656.6" stroke="#3c3c3c" stroke-width="0.9"/><path d="M656.7 1.8v3.4" stroke="#1a7a7a" stroke-width="0.6"/></svg>
<div class="t" style="left:409.85px;top:769.47px;height:13.80px;line-height:13.80px;font-size:11.5px;color:#e8743c;width:24.62px;text-align:center;">25 ns</div>
<div style="left:234.83px;top:800.49px;width:806.89px;height:98.95px;border:1.5px solid #c8c8c8;border-radius:4px"></div>
<div class="blue" style="left:244.43px;top:791.88px;width:44.55px;height:16.49px;line-height:16.69px;font-size:11px;font-weight:bold;border-color:#cfe0ff">Scales</div>
<div class="blk" style="left:906.83px;top:790.15px;width:30.52px;height:17.48px;line-height:17.48px;font-size:11.2px;font-weight:bold;text-align:center;border:1.3px solid #d8d8d8;border-radius:4px;padding:0">Auto</div>
<div class="blk" style="left:938.83px;top:790.15px;width:30.52px;height:17.48px;line-height:17.48px;font-size:11.2px;font-weight:bold;text-align:center;border:1.3px solid #d8d8d8;border-radius:4px;padding:0">Max</div>
<div class="blue" style="left:970.83px;top:790.15px;width:30.52px;height:17.48px;line-height:17.48px;font-size:11.2px;font-weight:bold;text-align:center;border:1.3px solid #d8d8d8;border-radius:4px;padding:0">Mid</div>
<div class="blk" style="left:1002.83px;top:790.15px;width:30.52px;height:17.48px;line-height:17.48px;font-size:11.2px;font-weight:bold;text-align:center;border:1.3px solid #d8d8d8;border-radius:4px;padding:0">Min</div>
<div class="t" style="left:396.31px;top:811.87px;height:13.68px;line-height:13.68px;font-size:11.4px;color:#d6d6d6;font-weight:bold">Vertical Scale</div>
<div class="t" style="left:545.23px;top:811.87px;height:13.68px;line-height:13.68px;font-size:11.4px;color:#d6d6d6;font-weight:bold">Offset + Position</div>
<div class="t" style="left:696.62px;top:811.87px;height:13.68px;line-height:13.68px;font-size:11.4px;color:#d6d6d6;font-weight:bold">Horizontal Scale</div>
<div class="t" style="left:848.74px;top:811.87px;height:13.68px;line-height:13.68px;font-size:11.4px;color:#d6d6d6;font-weight:bold">Delay + Position</div>
<div class="t" style="left:240.00px;top:826.88px;height:13.68px;line-height:13.68px;font-size:11.4px;color:#e6e06a;font-weight:bold">Channel 1</div>
<div class="t" style="left:396.31px;top:826.88px;height:13.68px;line-height:13.68px;font-size:11.4px;color:#e6e06a;font-weight:bold">100 mV/div</div>
<div class="t" style="left:548.92px;top:826.88px;height:13.68px;line-height:13.68px;font-size:11.4px;color:#e6e06a;font-weight:bold">0 V</div>
<div class="t" style="left:696.62px;top:826.88px;height:13.68px;line-height:13.68px;font-size:11.4px;color:#e6e06a;font-weight:bold">10 ns/div</div>
<div class="t" style="left:850.46px;top:826.88px;height:13.68px;line-height:13.68px;font-size:11.4px;color:#e6e06a;font-weight:bold">0 s</div>
<div class="t" style="left:240.00px;top:843.38px;height:13.68px;line-height:13.68px;font-size:11.4px;color:#6fdada;font-weight:bold">Channel 2</div>
<div class="t" style="left:396.31px;top:843.38px;height:13.68px;line-height:13.68px;font-size:11.4px;color:#6fdada;font-weight:bold">100 mV/div</div>
<div class="t" style="left:548.92px;top:843.38px;height:13.68px;line-height:13.68px;font-size:11.4px;color:#6fdada;font-weight:bold">0 V</div>
<div class="t" style="left:696.62px;top:843.38px;height:13.68px;line-height:13.68px;font-size:11.4px;color:#6fdada;font-weight:bold">10 ns/div</div>
<div class="t" style="left:850.46px;top:843.38px;height:13.68px;line-height:13.68px;font-size:11.4px;color:#6fdada;font-weight:bold">0 s</div>
<div style="left:232.62px;top:901.42px;width:1687.38px;height:1.72px;background:#d8d8d8"></div>
<div class="blue" style="left:235.82px;top:905.85px;width:27.32px;height:57.60px;border-radius:5px;font-size:9.5px;font-weight:bold;padding-top:9.1px;background:linear-gradient(#6a9cf0,#4a84e8 50%,#3a72dc);border-color:#3a62b8">CH1</div>
<div style="left:243.94px;top:943.51px;width:10.83px;height:10.58px;background:#f0e850;border:1px solid #333"></div>
<div class="blk" style="left:268.31px;top:907.32px;width:91.57px;height:18.71px;line-height:18.91px;padding-left:5px;font-size:11.4px;color:#f0e850">100 mV/div</div>
<div style="left:268.31px;top:926.52px;width:67.69px;height:2.95px;background:#8f45e4"></div>
<div style="left:334.77px;top:926.28px;width:2.46px;height:3.45px;background:#e03030"></div>
<div style="left:268.31px;top:929.97px;width:91.57px;height:16.74px;background:linear-gradient(#ffffff,#efefef 45%,#d4d4d4 55%,#dedede);border:1.6px solid #626262;border-radius:3px"></div>
<svg style="left:268.31px;top:929.97px;width:91.57px;height:16.74px" viewBox="0 0 91.57 16.74"><line x1="18.8" y1="0" x2="18.8" y2="16.7" stroke="#7a7a7a" stroke-width="1"/><line x1="38.0" y1="0" x2="38.0" y2="16.7" stroke="#7a7a7a" stroke-width="1"/><line x1="52.7" y1="0" x2="52.7" y2="16.7" stroke="#7a7a7a" stroke-width="1"/><line x1="71.9" y1="0" x2="71.9" y2="16.7" stroke="#7a7a7a" stroke-width="1"/><path d="M5.9 6.1h7.0l-3.5 5.1z" fill="#1a1a1a"/><path d="M24.9 11.0h7.0l-3.5 -5.1z" fill="#1a1a1a"/><path d="M57.7 5.4h9.2l-4.6 6.7z" fill="#1a1a1a"/><path d="M77.1 11.8h9.2l-4.6 -6.7z" fill="#1a1a1a"/></svg>
<div class="t" style="left:306.31px;top:931.38px;height:14.40px;line-height:14.40px;font-size:12px;color:#1a1a1a;width:14.65px;text-align:center;">0</div>
<div class="blk" style="left:268.31px;top:953.60px;width:91.57px;height:17.97px;line-height:18.17px;padding-left:9px;font-size:11.4px;color:#f0e850">0 V</div>
<div style="left:312.62px;top:972.31px;width:2.46px;height:2.95px;background:#e03030"></div>
<div style="left:268.31px;top:976.74px;width:91.57px;height:16.25px;background:linear-gradient(#ffffff,#efefef 45%,#d4d4d4 55%,#dedede);border:1.6px solid #626262;border-radius:3px"></div>
<svg style="left:268.31px;top:976.74px;width:91.57px;height:16.25px" viewBox="0 0 91.57 16.25"><line x1="18.8" y1="0" x2="18.8" y2="16.2" stroke="#7a7a7a" stroke-width="1"/><line x1="38.0" y1="0" x2="38.0" y2="16.2" stroke="#7a7a7a" stroke-width="1"/><line x1="52.7" y1="0" x2="52.7" y2="16.2" stroke="#7a7a7a" stroke-width="1"/><line x1="71.9" y1="0" x2="71.9" y2="16.2" stroke="#7a7a7a" stroke-width="1"/><path d="M5.9 5.8h7.0l-3.5 5.1z" fill="#1a1a1a"/><path d="M24.9 10.7h7.0l-3.5 -5.1z" fill="#1a1a1a"/><path d="M57.7 5.1h9.2l-4.6 6.7z" fill="#1a1a1a"/><path d="M77.1 11.6h9.2l-4.6 -6.7z" fill="#1a1a1a"/></svg>
<div class="t" style="left:306.31px;top:977.91px;height:14.40px;line-height:14.40px;font-size:12px;color:#1a1a1a;width:14.65px;text-align:center;">0</div>
<div class="blue" style="left:365.29px;top:905.85px;width:27.32px;height:57.60px;border-radius:5px;font-size:9.5px;font-weight:bold;padding-top:9.1px;background:linear-gradient(#6a9cf0,#4a84e8 50%,#3a72dc);border-color:#3a62b8">CH2</div>
<div style="left:373.42px;top:943.51px;width:10.83px;height:10.58px;background:#7fe8e8;border:1px solid #333"></div>
<div class="blk" style="left:397.78px;top:907.32px;width:91.57px;height:18.71px;line-height:18.91px;padding-left:5px;font-size:11.4px;color:#7fe8e8">100 mV/div</div>
<div style="left:397.78px;top:926.52px;width:67.69px;height:2.95px;background:#8f45e4"></div>
<div style="left:464.25px;top:926.28px;width:2.46px;height:3.45px;background:#e03030"></div>
<div style="left:397.78px;top:929.97px;width:91.57px;height:16.74px;background:linear-gradient(#ffffff,#efefef 45%,#d4d4d4 55%,#dedede);border:1.6px solid #626262;border-radius:3px"></div>
<svg style="left:397.78px;top:929.97px;width:91.57px;height:16.74px" viewBox="0 0 91.57 16.74"><line x1="18.8" y1="0" x2="18.8" y2="16.7" stroke="#7a7a7a" stroke-width="1"/><line x1="38.0" y1="0" x2="38.0" y2="16.7" stroke="#7a7a7a" stroke-width="1"/><line x1="52.7" y1="0" x2="52.7" y2="16.7" stroke="#7a7a7a" stroke-width="1"/><line x1="71.9" y1="0" x2="71.9" y2="16.7" stroke="#7a7a7a" stroke-width="1"/><path d="M5.9 6.1h7.0l-3.5 5.1z" fill="#1a1a1a"/><path d="M24.9 11.0h7.0l-3.5 -5.1z" fill="#1a1a1a"/><path d="M57.7 5.4h9.2l-4.6 6.7z" fill="#1a1a1a"/><path d="M77.1 11.8h9.2l-4.6 -6.7z" fill="#1a1a1a"/></svg>
<div class="t" style="left:435.79px;top:931.38px;height:14.40px;line-height:14.40px;font-size:12px;color:#1a1a1a;width:14.65px;text-align:center;">0</div>
<div class="blk" style="left:397.78px;top:952.37px;width:91.57px;height:17.97px;line-height:18.17px;padding-left:9px;font-size:11.4px;color:#7fe8e8">0 V</div>
<div style="left:442.09px;top:971.08px;width:2.46px;height:2.95px;background:#e03030"></div>
<div style="left:397.78px;top:975.51px;width:91.57px;height:16.25px;background:linear-gradient(#ffffff,#efefef 45%,#d4d4d4 55%,#dedede);border:1.6px solid #626262;border-radius:3px"></div>
<svg style="left:397.78px;top:975.51px;width:91.57px;height:16.25px" viewBox="0 0 91.57 16.25"><line x1="18.8" y1="0" x2="18.8" y2="16.2" stroke="#7a7a7a" stroke-width="1"/><line x1="38.0" y1="0" x2="38.0" y2="16.2" stroke="#7a7a7a" stroke-width="1"/><line x1="52.7" y1="0" x2="52.7" y2="16.2" stroke="#7a7a7a" stroke-width="1"/><line x1="71.9" y1="0" x2="71.9" y2="16.2" stroke="#7a7a7a" stroke-width="1"/><path d="M5.9 5.8h7.0l-3.5 5.1z" fill="#1a1a1a"/><path d="M24.9 10.7h7.0l-3.5 -5.1z" fill="#1a1a1a"/><path d="M57.7 5.1h9.2l-4.6 6.7z" fill="#1a1a1a"/><path d="M77.1 11.6h9.2l-4.6 -6.7z" fill="#1a1a1a"/></svg>
<div class="t" style="left:435.79px;top:976.68px;height:14.40px;line-height:14.40px;font-size:12px;color:#1a1a1a;width:14.65px;text-align:center;">0</div>
<div class="blue" style="left:595.20px;top:906.83px;width:28.80px;height:19.20px;line-height:19.40px;font-size:12px;border-radius:4px 4px 0 0">A</div>
<div class="btn" style="left:595.20px;top:925.78px;width:28.80px;height:18.95px;line-height:19.15px;border-radius:0;font-size:11.2px">A+B</div>
<div class="btn" style="left:595.20px;top:944.49px;width:28.80px;height:18.95px;line-height:19.15px;font-size:12px;border-radius:0 0 4px 4px">B</div>
<div class="blk" style="left:628.43px;top:906.34px;width:91.57px;height:18.95px;line-height:19.15px;padding-left:6px;font-size:11.4px">10 ns/div</div>
<div style="left:628.43px;top:926.52px;width:33.97px;height:3.20px;background:#8f45e4"></div>
<div style="left:628.43px;top:930.46px;width:91.57px;height:15.75px;background:linear-gradient(#ffffff,#efefef 45%,#d4d4d4 55%,#dedede);border:1.6px solid #626262;border-radius:3px"></div>
<svg style="left:628.43px;top:930.46px;width:91.57px;height:15.75px" viewBox="0 0 91.57 15.75"><line x1="18.8" y1="0" x2="18.8" y2="15.8" stroke="#7a7a7a" stroke-width="1"/><line x1="38.0" y1="0" x2="38.0" y2="15.8" stroke="#7a7a7a" stroke-width="1"/><line x1="52.7" y1="0" x2="52.7" y2="15.8" stroke="#7a7a7a" stroke-width="1"/><line x1="71.9" y1="0" x2="71.9" y2="15.8" stroke="#7a7a7a" stroke-width="1"/><path d="M11.8 4.4v7.0l-5.1 -3.5z" fill="#1a1a1a"/><path d="M25.9 4.4v7.0l5.1 -3.5z" fill="#1a1a1a"/><path d="M65.5 3.3v9.2l-6.7 -4.6z" fill="#1a1a1a"/><path d="M78.5 3.3v9.2l6.7 -4.6z" fill="#1a1a1a"/></svg>
<div class="t" style="left:666.43px;top:931.38px;height:14.40px;line-height:14.40px;font-size:12px;color:#1a1a1a;width:14.65px;text-align:center;">0</div>
<div class="disg" style="left:628.43px;top:954.09px;width:91.57px;height:18.22px;line-height:18.42px;">0 s</div>
<div style="left:628.43px;top:976.25px;width:91.57px;height:16.49px;background:#c3c3c3;border:1.3px solid #e0e0e0;border-radius:3px;box-shadow:0 0 0 0.8px #a8a8a8"></div>
<svg style="left:628.43px;top:976.25px;width:91.57px;height:16.49px" viewBox="0 0 91.57 16.49"><line x1="18.8" y1="0" x2="18.8" y2="16.5" stroke="#e0e0e0" stroke-width="1"/><line x1="38.0" y1="0" x2="38.0" y2="16.5" stroke="#e0e0e0" stroke-width="1"/><line x1="52.7" y1="0" x2="52.7" y2="16.5" stroke="#e0e0e0" stroke-width="1"/><line x1="71.9" y1="0" x2="71.9" y2="16.5" stroke="#e0e0e0" stroke-width="1"/><path d="M11.8 4.7v7.0l-5.1 -3.5z" fill="#a4a4a4"/><path d="M25.9 4.7v7.0l5.1 -3.5z" fill="#a4a4a4"/><path d="M65.5 3.6v9.2l-6.7 -4.6z" fill="#a4a4a4"/><path d="M78.5 3.6v9.2l6.7 -4.6z" fill="#a4a4a4"/></svg>
<div class="t" style="left:666.43px;top:977.54px;height:14.40px;line-height:14.40px;font-size:12px;color:#a4a4a4;width:14.65px;text-align:center;">0</div>
<div class="btn" style="left:783.75px;top:907.08px;width:80.25px;height:18.46px;line-height:18.66px;font-size:11.9px;-webkit-text-stroke:0.35px;background:linear-gradient(#fafafa,#e6e6e6 45%,#cdcdcd 55%,#d2d2d2);border-radius:4px 0 0 0">Ext Direct</div>
<div class="btn" style="left:864.00px;top:907.08px;width:77.29px;height:18.46px;line-height:18.66px;font-size:11.9px;-webkit-text-stroke:0.35px;background:linear-gradient(#fafafa,#e6e6e6 45%,#cdcdcd 55%,#d2d2d2);border-radius:0 4px 0 0">Ext Presc</div>
<div class="btn" style="left:783.75px;top:925.29px;width:80.25px;height:19.45px;line-height:19.65px;font-size:11.9px;-webkit-text-stroke:0.35px;background:linear-gradient(#fafafa,#e6e6e6 45%,#cdcdcd 55%,#d2d2d2);border-radius:0">Ch1 Direct</div>
<div class="btn" style="left:864.00px;top:925.29px;width:77.29px;height:19.45px;line-height:19.65px;font-size:11.9px;-webkit-text-stroke:0.35px;background:linear-gradient(#fafafa,#e6e6e6 45%,#cdcdcd 55%,#d2d2d2);border-radius:0">Ch2 Direct</div>
<div class="blue" style="left:783.75px;top:944.49px;width:80.25px;height:19.20px;line-height:19.40px;font-size:11.9px;-webkit-text-stroke:0.35px;border-radius:0 0 0 4px">Int Clock</div>
<div class="disg" style="left:864.00px;top:944.49px;width:77.29px;height:19.20px;line-height:19.40px;font-size:11.9px;-webkit-text-stroke:0.35px;border-radius:0 0 4px 0">Auxiliary</div>
<div class="disg" style="left:783.75px;top:974.28px;width:80.25px;height:18.46px;line-height:18.66px;font-size:11.9px;-webkit-text-stroke:0.35px;border-radius:4px 0 0 4px;background:#b3b3b3;border-color:#9a9a9a #c8c8c8 #d0d0d0 #9a9a9a;color:#8c8c8c;text-shadow:none;text-align:left;padding-left:30.3px">Freerun</div>
<div class="disg" style="left:864.00px;top:974.28px;width:77.29px;height:18.46px;line-height:18.66px;font-size:11.9px;-webkit-text-stroke:0.35px;border-radius:0 4px 4px 0;background:#c6c6c6;text-align:left;padding-left:30.0px">Trig'd</div>
<svg style="left:790.15px;top:977.72px;width:17.72px;height:11.82px" viewBox="0 0 16 10"><path d="M3 1.500h10v7H3z" stroke="#8f8cd0" stroke-width="1.800" fill="none"/><path d="M0 5l3-3v6zM16 5l-3-3v6z" fill="#8f8cd0"/></svg>
<svg style="left:870.40px;top:977.23px;width:16.25px;height:12.80px" viewBox="0 0 14 12"><path d="M1 9.500h5V2.500h7" stroke="#b4a8d8" stroke-width="1.500" fill="none"/><path d="M2 6h9M6.500 1v10" stroke="#e8a0b4" stroke-width="1.300"/></svg>
<div class="t" style="left:952.37px;top:906.34px;height:14.76px;line-height:14.76px;font-size:12.3px;color:#969696;text-shadow:1px 1px 0 rgba(255,255,255,0.3)">Internal Rate</div>
<div class="disg" style="left:950.65px;top:925.05px;width:92.31px;height:19.69px;line-height:19.89px;border-radius:4px 4px 0 0">1 µs</div>
<div style="left:950.65px;top:944.25px;width:92.31px;height:19.45px;background:#c3c3c3;border:1.3px solid #e0e0e0;border-radius:3px;box-shadow:0 0 0 0.8px #a8a8a8"></div>
<svg style="left:950.65px;top:944.25px;width:92.31px;height:19.45px" viewBox="0 0 92.31 19.45"><line x1="18.9" y1="0" x2="18.9" y2="19.4" stroke="#e0e0e0" stroke-width="1"/><line x1="38.3" y1="0" x2="38.3" y2="19.4" stroke="#e0e0e0" stroke-width="1"/><line x1="53.1" y1="0" x2="53.1" y2="19.4" stroke="#e0e0e0" stroke-width="1"/><line x1="72.5" y1="0" x2="72.5" y2="19.4" stroke="#e0e0e0" stroke-width="1"/><path d="M11.9 6.2v7.0l-5.1 -3.5z" fill="#a4a4a4"/><path d="M26.2 6.2v7.0l5.1 -3.5z" fill="#a4a4a4"/><path d="M66.0 5.1v9.2l-6.7 -4.6z" fill="#a4a4a4"/><path d="M79.2 5.1v9.2l6.7 -4.6z" fill="#a4a4a4"/></svg>
<div class="t" style="left:988.95px;top:947.02px;height:14.40px;line-height:14.40px;font-size:12px;color:#a4a4a4;width:14.77px;text-align:center;">0</div>
<div class="disg" style="left:950.89px;top:974.28px;width:47.02px;height:18.46px;line-height:18.66px;font-size:11.9px;-webkit-text-stroke:0.35px;border-radius:4px 0 0 4px;background:#a9a9a9;color:#7c7c7c;text-shadow:none;border-color:#8c8c8c #b8b8b8 #c4c4c4 #8c8c8c">Pos</div>
<div class="disg" style="left:997.91px;top:974.28px;width:45.05px;height:18.46px;line-height:18.66px;font-size:11.9px;-webkit-text-stroke:0.35px;border-radius:0 4px 4px 0;background:#cecece;color:#7e7e7e;text-shadow:none;border-color:#e4e4e4">Neg</div>
<div class="btn" style="left:271.75px;top:1000.86px;width:91.54px;height:18.22px;line-height:18.42px;font-size:11.9px;-webkit-text-stroke:0.35px;border-radius:0;text-align:left;padding-left:31.0px">Channels</div>
<svg style="left:277.66px;top:1002.83px;width:20.68px;height:14.28px" viewBox="0 0 16 16" preserveAspectRatio="none"><path d="M1.500 2.500l3.500-1.500 9.500 10-1 3.500-3.500 0.500-9.500-10z" fill="#c89a18" stroke="#6a4a00" stroke-width="1"/><path d="M4 5l3-2M7 8l3-2M10 11l3-2" stroke="#fff2a0" stroke-width="1.2"/></svg>
<div class="btn" style="left:363.30px;top:1000.86px;width:91.54px;height:18.22px;line-height:18.42px;font-size:11.9px;-webkit-text-stroke:0.35px;border-radius:0;text-align:left;padding-left:31.0px">Acquire</div>
<svg style="left:369.21px;top:1002.83px;width:20.68px;height:14.28px" viewBox="0 0 16 16" preserveAspectRatio="none"><path d="M1.500 15V2M8 15V1" stroke="#222" stroke-width="1.6"/><path d="M4.500 15V3" stroke="#e02020" stroke-width="1.8"/><path d="M11 15V4" stroke="#20a838" stroke-width="1.8"/><path d="M14 15V2" stroke="#3040e0" stroke-width="1.8"/><path d="M0 6c3-5 5 5 8 0s5 5 8 0" stroke="#d040d0" stroke-width="1.2" fill="none"/></svg>
<div class="btn" style="left:454.84px;top:1000.86px;width:91.54px;height:18.22px;line-height:18.42px;font-size:11.9px;-webkit-text-stroke:0.35px;border-radius:0;text-align:left;padding-left:31.0px">Trigger</div>
<svg style="left:460.75px;top:1002.83px;width:20.68px;height:14.28px" viewBox="0 0 16 16" preserveAspectRatio="none"><path d="M1 12h6V4h8" stroke="#2030d0" stroke-width="2" fill="none"/><path d="M3 8h9" stroke="#e02020" stroke-width="2"/></svg>
<div class="btn" style="left:546.39px;top:1000.86px;width:91.54px;height:18.22px;line-height:18.42px;font-size:11.9px;-webkit-text-stroke:0.35px;border-radius:0;text-align:left;padding-left:31.0px">Display</div>
<svg style="left:552.30px;top:1002.83px;width:20.68px;height:14.28px" viewBox="0 0 16 16" preserveAspectRatio="none"><rect x="0" y="3" width="16" height="10" fill="#1a3a1a"/><path d="M1 8h14M1 5h14M1 11h14" stroke="#c8d020" stroke-width="1"/></svg>
<div class="btn" style="left:637.93px;top:1000.86px;width:91.54px;height:18.22px;line-height:18.42px;font-size:11.9px;-webkit-text-stroke:0.35px;border-radius:0;text-align:left;padding-left:31.0px">Save/Recall</div>
<svg style="left:643.84px;top:1002.83px;width:20.68px;height:14.28px" viewBox="0 0 16 16" preserveAspectRatio="none"><path d="M1 1h12l2 2v12H1z" fill="#222"/><rect x="4" y="1" width="7" height="5" fill="#fff"/><rect x="3" y="9" width="10" height="6" fill="#ddd"/></svg>
<div class="btn" style="left:729.48px;top:1000.86px;width:91.54px;height:18.22px;line-height:18.42px;font-size:11.9px;-webkit-text-stroke:0.35px;border-radius:0;text-align:left;padding-left:31.0px">Marker</div>
<svg style="left:735.38px;top:1002.83px;width:20.68px;height:14.28px" viewBox="0 0 16 16" preserveAspectRatio="none"><path d="M0 14h3c2 0 2-11 5-11s3 11 5 11h3" stroke="#2030d0" stroke-width="1.8" fill="none"/><path d="M8 0v16" stroke="#e02080" stroke-width="1"/></svg>
<div class="btn" style="left:821.02px;top:1000.86px;width:91.54px;height:18.22px;line-height:18.42px;font-size:11.9px;-webkit-text-stroke:0.35px;border-radius:0;text-align:left;padding-left:31.0px">Measure</div>
<svg style="left:826.93px;top:1002.83px;width:20.68px;height:14.28px" viewBox="0 0 16 16" preserveAspectRatio="none"><path d="M2 2v12M7 2v12" stroke="#2030c0" stroke-width="2"/><path d="M7 8h9" stroke="#2030c0" stroke-width="2"/></svg>
<div class="btn" style="left:912.57px;top:1000.86px;width:91.54px;height:18.22px;line-height:18.42px;font-size:11.9px;-webkit-text-stroke:0.35px;border-radius:0;text-align:left;padding-left:31.0px">Math</div>
<div class="t" style="left:916.50px;top:1003.07px;height:13.80px;line-height:13.80px;font-size:11.5px;color:#111;font-weight:bold;font-family:&quot;Liberation Serif&quot;,serif"><i>f(x)</i></div>
<div class="btn" style="left:271.75px;top:1019.08px;width:91.54px;height:18.22px;line-height:18.42px;font-size:11.9px;-webkit-text-stroke:0.35px;border-radius:0;text-align:left;padding-left:31.0px">Histogram</div>
<svg style="left:277.66px;top:1021.29px;width:20.68px;height:13.78px" viewBox="0 0 16 16" preserveAspectRatio="none"><path d="M0 15.5h16v-1c-4 0-5.5-4-6.3-9L8 0 6.300 5.500c-0.800 5-2.300 9-6.300 9z" fill="#f01818"/></svg>
<div class="btn" style="left:363.30px;top:1019.08px;width:91.54px;height:18.22px;line-height:18.42px;font-size:11.9px;-webkit-text-stroke:0.35px;border-radius:0;text-align:left;padding-left:31.0px">Eye</div>
<svg style="left:369.21px;top:1021.29px;width:20.68px;height:13.78px" viewBox="0 0 16 16" preserveAspectRatio="none"><path d="M0 3c4 0 6 10 8 10s4-10 8-10M0 13c4 0 6-10 8-10s4 10 8 10" stroke="#2030e0" stroke-width="1.6" fill="none"/><path d="M0 3h16M0 13h16" stroke="#2030e0" stroke-width="1.2"/></svg>
<div class="btn" style="left:454.84px;top:1019.08px;width:91.54px;height:18.22px;line-height:18.42px;font-size:11.9px;-webkit-text-stroke:0.35px;border-radius:0;text-align:left;padding-left:31.0px">Mask Test</div>
<svg style="left:460.75px;top:1021.29px;width:20.68px;height:13.78px" viewBox="0 0 16 16" preserveAspectRatio="none"><path d="M0 3c4 0 6 10 8 10s4-10 8-10M0 13c4 0 6-10 8-10s4 10 8 10" stroke="#2030e0" stroke-width="1.6" fill="none"/><rect x="5" y="6" width="6" height="4" fill="#2030e0"/><path d="M0 3h16M0 13h16" stroke="#2030e0" stroke-width="1.2"/></svg>
<div class="btn" style="left:546.39px;top:1019.08px;width:91.54px;height:18.22px;line-height:18.42px;font-size:11.9px;-webkit-text-stroke:0.35px;border-radius:0;text-align:left;padding-left:31.0px">Aux In/Out</div>
<svg style="left:552.30px;top:1021.29px;width:20.68px;height:13.78px" viewBox="0 0 16 16" preserveAspectRatio="none"><path d="M0 8h5M11 8h5M5 4v8M11 4v8" stroke="#2030d0" stroke-width="1.6"/><circle cx="8" cy="8" r="3" fill="none" stroke="#2030d0" stroke-width="1.4"/></svg>
<div class="blue" style="left:641.48px;top:1019.08px;width:96.00px;height:18.22px;line-height:18.42px;font-size:11.9px;-webkit-text-stroke:0.35px;border-radius:0;text-align:left;padding-left:28.1px">TDR/TDT</div>
<svg style="left:643.84px;top:1021.29px;width:20.68px;height:13.78px" viewBox="0 0 16 16" preserveAspectRatio="none"><path d="M0.500 15.500V8.500h5.500V1.500h9.500v14z" fill="#fff" stroke="#1a3aa8" stroke-width="1"/><path d="M3 13V11h5.500V4.500h4" stroke="#2a50c8" stroke-width="1.6" fill="none"/></svg>
<div style="left:729.48px;top:1019.08px;width:91.54px;height:18.22px;background:#c9c9c9;border:1px solid #dedede;border-right-color:#a8a8a8;border-bottom-color:#a8a8a8"></div>
<div style="left:821.02px;top:1019.08px;width:91.54px;height:18.22px;background:#c9c9c9;border:1px solid #dedede;border-right-color:#a8a8a8;border-bottom-color:#a8a8a8"></div>
<div class="btn" style="left:912.57px;top:1019.08px;width:91.54px;height:18.22px;line-height:18.42px;font-size:11.9px;-webkit-text-stroke:0.35px;border-radius:0;text-align:left;padding-left:31.0px">Utility</div>
<svg style="left:918.47px;top:1021.29px;width:20.68px;height:13.78px" viewBox="0 0 16 16" preserveAspectRatio="none"><path d="M2 14l7-7a4 4 0 1 1 3 3l-7 7z" fill="#2040d0"/></svg>
<div class="red" style="left:638.28px;top:1016.12px;width:102.40px;height:27.32px;"></div>
<div style="left:236.31px;top:999.88px;width:31.51px;height:39.38px;background:linear-gradient(90deg,#e6e6e6,#d0d0d0 35%,#9a9a9a 80%,#808080);border:1px solid #8a8a8a;border-radius:2px 7px 2px 2px"></div>
<svg style="left:233.85px;top:999.88px;width:36.43px;height:39.38px" viewBox="0 0 14.8 16"><g><path d="M1.6 1.2 C3.2 0.6 5.6 2.4 6.2 4.4 C6.6 6.2 6.4 8.6 6.6 10.6 C6.2 11.8 5.2 11.6 5 10.4 C4.6 9.2 4 8.6 3.2 8.6 C2.4 9.2 1.6 9 1.4 7.8 C0.2 6.4 -0.2 3.2 1.6 1.2Z" fill="#0a10f4"/><path d="M8 2.2l1.2 2-1.2 2z" fill="#667"/><path d="M7.8 1.6v5.4" stroke="#777" stroke-width="0.35"/></g></svg>
<div style="left:1011.69px;top:999.88px;width:31.51px;height:39.38px;background:linear-gradient(270deg,#e6e6e6,#d0d0d0 35%,#9a9a9a 80%,#808080);border:1px solid #8a8a8a;border-radius:7px 2px 2px 2px"></div>
<svg style="left:1009.23px;top:999.88px;width:36.43px;height:39.38px" viewBox="0 0 14.8 16"><g transform="translate(14.8,0) scale(-1,1)"><path d="M1.6 1.2 C3.2 0.6 5.6 2.4 6.2 4.4 C6.6 6.2 6.4 8.6 6.6 10.6 C6.2 11.8 5.2 11.6 5 10.4 C4.6 9.2 4 8.6 3.2 8.6 C2.4 9.2 1.6 9 1.4 7.8 C0.2 6.4 -0.2 3.2 1.6 1.2Z" fill="#0a10f4"/><path d="M8 2.2l1.2 2-1.2 2z" fill="#667"/><path d="M7.8 1.6v5.4" stroke="#777" stroke-width="0.35"/></g></svg>
</div></body></html>
